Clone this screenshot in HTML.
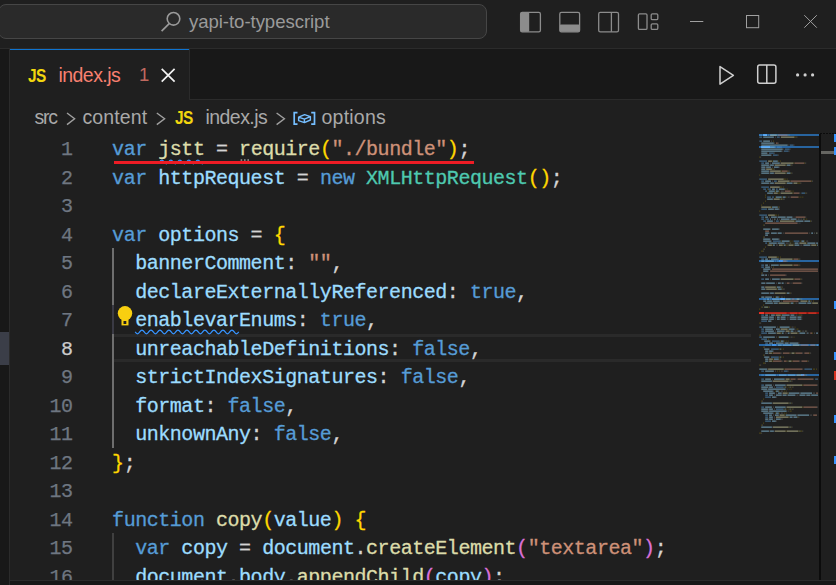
<!DOCTYPE html>
<html><head><meta charset="utf-8"><title>index.js - yapi-to-typescript</title>
<style>
html,body{margin:0;padding:0;background:#1f1f1f;}
body{width:836px;height:585px;position:relative;overflow:hidden;font-family:"Liberation Sans",sans-serif;color:#ccc;}
.abs{position:absolute}
#title{position:absolute;left:0;top:0;width:836px;height:48px;background:#1f1f1f;border-bottom:1px solid #2b2b2b}
#cc{position:absolute;left:-2px;top:4px;width:487px;height:33px;border:1px solid #464646;border-radius:8px;background:#2a2a2a}
#cctext{position:absolute;left:189px;top:10px;font-size:18.6px;line-height:24px;color:#9a9a9a;letter-spacing:-0.06px;white-space:nowrap}
#left{position:absolute;left:0;top:49px;width:9px;height:536px;background:#181818;border-right:1px solid #2b2b2b}
#leftsel{position:absolute;left:0;top:332px;width:9px;height:33px;background:#3b3e48}
#tabs{position:absolute;left:10px;top:49px;width:826px;height:50px;background:#181818;border-bottom:1px solid #2b2b2b}
#tab{position:absolute;left:10px;top:49px;width:179px;height:51px;background:#1f1f1f;border-right:1px solid #2b2b2b}
#tabline{position:absolute;left:10px;top:49px;width:179px;height:1.3px;background:#0f74d0}
.js{position:absolute;font-weight:bold;color:#f2d60e;font-size:18.4px;line-height:20px;letter-spacing:-0.6px;white-space:nowrap;transform:scaleX(0.84);transform-origin:0 0}
.ui{position:absolute;font-size:19.5px;line-height:24px;white-space:nowrap}
#bc .ui{color:#a9a9a9}
#bottom{position:absolute;left:10px;top:580px;width:826px;height:5px;background:#181818;border-top:1px solid #2b2b2b}
.ln{position:absolute;left:20px;width:52.5px;text-align:right;height:28.5px;line-height:28.5px;font-family:"Liberation Mono",monospace;font-size:20px;letter-spacing:-0.45px;color:#6e7681;white-space:pre;-webkit-text-stroke:0.25px}
.ln.cur{color:#ccc}
.cl{position:absolute;left:112.1px;height:28.5px;line-height:28.5px;font-family:"Liberation Mono",monospace;font-size:20px;letter-spacing:-0.46px;white-space:pre;-webkit-text-stroke:0.3px}
.guide{position:absolute;left:112px;width:1.5px;background:#404040}
</style></head><body>
<div id="title">
 <div id="cc"></div>
 <svg class="abs" style="left:158px;top:8px" width="28" height="28" viewBox="0 0 28 28"><circle cx="15.5" cy="10.8" r="6.3" fill="none" stroke="#9a9a9a" stroke-width="1.6"/><path d="M11.2 15.6 L3.6 23.2" stroke="#9a9a9a" stroke-width="1.7" fill="none"/></svg>
 <div id="cctext">yapi-to-typescript</div>
 <svg class="abs" style="left:515px;top:8px" width="150" height="30" viewBox="515 8 150 30" fill="none" stroke="#8c8c8c" stroke-width="1.3">
  <rect x="520.6" y="12.4" width="19.8" height="19.4" rx="1.6"/><rect x="520.6" y="12.4" width="8.6" height="19.4" fill="#8c8c8c" stroke="none" rx="1.2"/>
  <rect x="559.8" y="12.4" width="19.8" height="19.4" rx="1.6"/><rect x="559.8" y="24.6" width="19.8" height="7.2" fill="#8c8c8c" stroke="none" rx="1.2"/>
  <rect x="598.7" y="12.4" width="19.8" height="19.4" rx="1.6"/><path d="M611.4 12.4V31.8"/>
  <rect x="638.4" y="13.8" width="8.6" height="15.6" rx="1.2"/><rect x="651.2" y="13.8" width="6.6" height="5.8" rx="1.2"/><rect x="651.2" y="23.8" width="6.6" height="5.6" rx="1.2"/>
 </svg>
 <svg class="abs" style="left:680px;top:8px" width="150" height="30" viewBox="680 8 150 30" fill="none" stroke="#a0a0a0" stroke-width="1">
  <path d="M690 21.5H703.3"/>
  <rect x="746.5" y="15.5" width="12.2" height="12.2"/>
  <path d="M804.3 15.2L816.8 27.7M816.8 15.2L804.3 27.7"/>
 </svg>
</div>
<div id="left"></div><div id="leftsel"></div>
<div id="tabs"></div>
<div id="tab"></div><div id="tabline"></div>
<div class="js" style="left:28px;top:65.5px">JS</div>
<div class="ui" id="tabname" style="left:58.5px;top:63px;color:#f88070;letter-spacing:-0.55px">index.js</div>
<div class="ui" id="tabnum" style="left:139px;top:63px;color:#c0695f;font-size:18.5px">1</div>
<svg class="abs" style="left:158px;top:65px" width="20" height="20" viewBox="158 65 20 20"><path d="M161.7 68.8L174.6 81.7M174.6 68.8L161.7 81.7" stroke="#f2f2f2" stroke-width="1.7" fill="none"/></svg>
<svg class="abs" style="left:710px;top:58px" width="120" height="34" viewBox="710 58 120 34" fill="none" stroke="#cfcfcf" stroke-width="1.5">
 <path d="M720 66.6L733.4 75.3L720 84.2Z" stroke-linejoin="round"/>
 <rect x="757.7" y="65" width="18.2" height="18.2" rx="2"/><path d="M766.8 65V83.2"/>
 <g fill="#cfcfcf" stroke="none"><circle cx="797.6" cy="74.9" r="1.6"/><circle cx="805.1" cy="74.9" r="1.6"/><circle cx="812.6" cy="74.9" r="1.6"/></g>
</svg>
<div id="bc">
 <div class="ui" id="b1" style="left:34.5px;top:105px;letter-spacing:-1.2px">src</div>
 <div class="ui" id="b2" style="left:82.5px;top:105px;letter-spacing:0.1px">content</div>
 <div class="js" style="left:175px;top:108px">JS</div>
 <div class="ui" id="b3" style="left:205.5px;top:105px;letter-spacing:-0.55px">index.js</div>
 <div class="ui" id="b4" style="left:321.5px;top:105px;letter-spacing:0.23px">options</div>
 <svg class="abs" style="left:60px;top:108px" width="240" height="22" viewBox="60 108 240 22" fill="none" stroke="#a0a0a0" stroke-width="1.4">
  <path d="M67 113L74.6 118.8L67 124.6"/><path d="M156.8 113L164.6 118.8L156.8 124.6"/><path d="M276.6 113L284.4 118.8L276.6 124.6"/>
 </svg>
 <svg class="abs" style="left:290px;top:108px" width="30" height="22" viewBox="290 108 30 22" fill="none" stroke="#75beff" stroke-width="1.7">
  <path d="M297.5 112.7H294.2V124.2H297.5"/><path d="M311.2 112.7H314.5V124.2H311.2"/>
  <path d="M298.6 117.2L304.6 114.6L310.4 116.6V120L304.4 122.6L298.6 120.6Z M298.6 117.2L304.4 119.2L310.4 116.6 M304.4 119.2V122.6" stroke-width="1.4" stroke-linejoin="round"/>
 </svg>
</div>
<!-- editor -->
<div class="abs" style="left:114px;top:334px;width:637px;height:22px;border-top:3px solid #2a2a2a;border-bottom:3px solid #2a2a2a;box-sizing:content-box"></div>
<div class="guide" style="left:111.7px;width:2px;top:248.0px;height:199.5px;background:#6e6e6e"></div><div class="guide" style="left:111.7px;width:2px;top:305.0px;height:28.5px;background:#3a3a44"></div>
<div class="guide" style="top:533.0px;height:47.0px"></div>
<div class="ln" style="top:136.10px">1</div>
<div class="cl" style="top:136.10px"><span style="color:#569cd6">var</span><span style="color:#d4d4d4"> </span><span style="color:#dcdcaa">jstt</span><span style="color:#d4d4d4"> = </span><span style="color:#dcdcaa">require</span><span style="color:#ffd700">(</span><span style="color:#ce9178">"./bundle"</span><span style="color:#ffd700">)</span><span style="color:#d4d4d4">;</span></div>
<div class="ln" style="top:164.60px">2</div>
<div class="cl" style="top:164.60px"><span style="color:#569cd6">var</span><span style="color:#d4d4d4"> </span><span style="color:#9cdcfe">httpRequest</span><span style="color:#d4d4d4"> = </span><span style="color:#569cd6">new</span><span style="color:#d4d4d4"> </span><span style="color:#4ec9b0">XMLHttpRequest</span><span style="color:#ffd700">()</span><span style="color:#d4d4d4">;</span></div>
<div class="ln" style="top:193.10px">3</div>
<div class="ln" style="top:221.60px">4</div>
<div class="cl" style="top:221.60px"><span style="color:#569cd6">var</span><span style="color:#d4d4d4"> </span><span style="color:#9cdcfe">options</span><span style="color:#d4d4d4"> = </span><span style="color:#ffd700">{</span></div>
<div class="ln" style="top:250.10px">5</div>
<div class="cl" style="top:250.10px"><span style="color:#9cdcfe">  bannerComment</span><span style="color:#d4d4d4">: </span><span style="color:#ce9178">""</span><span style="color:#d4d4d4">,</span></div>
<div class="ln" style="top:278.60px">6</div>
<div class="cl" style="top:278.60px"><span style="color:#9cdcfe">  declareExternallyReferenced</span><span style="color:#d4d4d4">: </span><span style="color:#569cd6">true</span><span style="color:#d4d4d4">,</span></div>
<div class="ln" style="top:307.10px">7</div>
<div class="cl" style="top:307.10px"><span style="color:#9cdcfe">  enablevarEnums</span><span style="color:#d4d4d4">: </span><span style="color:#569cd6">true</span><span style="color:#d4d4d4">,</span></div>
<div class="ln cur" style="top:335.60px">8</div>
<div class="cl" style="top:335.60px"><span style="color:#9cdcfe">  unreachableDefinitions</span><span style="color:#d4d4d4">: </span><span style="color:#569cd6">false</span><span style="color:#d4d4d4">,</span></div>
<div class="ln" style="top:364.10px">9</div>
<div class="cl" style="top:364.10px"><span style="color:#9cdcfe">  strictIndexSignatures</span><span style="color:#d4d4d4">: </span><span style="color:#569cd6">false</span><span style="color:#d4d4d4">,</span></div>
<div class="ln" style="top:392.60px">10</div>
<div class="cl" style="top:392.60px"><span style="color:#9cdcfe">  format</span><span style="color:#d4d4d4">: </span><span style="color:#569cd6">false</span><span style="color:#d4d4d4">,</span></div>
<div class="ln" style="top:421.10px">11</div>
<div class="cl" style="top:421.10px"><span style="color:#9cdcfe">  unknownAny</span><span style="color:#d4d4d4">: </span><span style="color:#569cd6">false</span><span style="color:#d4d4d4">,</span></div>
<div class="ln" style="top:449.60px">12</div>
<div class="cl" style="top:449.60px"><span style="color:#ffd700">}</span><span style="color:#d4d4d4">;</span></div>
<div class="ln" style="top:478.10px">13</div>
<div class="ln" style="top:506.60px">14</div>
<div class="cl" style="top:506.60px"><span style="color:#569cd6">function</span><span style="color:#d4d4d4"> </span><span style="color:#dcdcaa">copy</span><span style="color:#ffd700">(</span><span style="color:#9cdcfe">value</span><span style="color:#ffd700">)</span><span style="color:#d4d4d4"> </span><span style="color:#ffd700">{</span></div>
<div class="ln" style="top:535.10px">15</div>
<div class="cl" style="top:535.10px"><span style="color:#569cd6">  var</span><span style="color:#d4d4d4"> </span><span style="color:#9cdcfe">copy</span><span style="color:#d4d4d4"> = </span><span style="color:#9cdcfe">document</span><span style="color:#d4d4d4">.</span><span style="color:#dcdcaa">createElement</span><span style="color:#da70d6">(</span><span style="color:#ce9178">"textarea"</span><span style="color:#da70d6">)</span><span style="color:#d4d4d4">;</span></div>
<div class="ln" style="top:563.60px">16</div>
<div class="cl" style="top:563.60px"><span style="color:#9cdcfe">  document</span><span style="color:#d4d4d4">.</span><span style="color:#9cdcfe">body</span><span style="color:#d4d4d4">.</span><span style="color:#dcdcaa">appendChild</span><span style="color:#da70d6">(</span><span style="color:#9cdcfe">copy</span><span style="color:#da70d6">)</span><span style="color:#d4d4d4">;</span></div>
<svg class="abs" style="left:150px;top:154px" width="120" height="14" viewBox="150 154 120 14" fill="none"><path d="M159.6 162 q2.25 -3.7 4.5 0 t4.5 0 t4.5 0 t4.5 0 t4.5 0 t4.5 0 t4.5 0 t4.5 0 t4.5 0 t4.5 0" stroke="#3794ff" stroke-width="1.25"/><g fill="#9a9a9a"><rect x="240.6" y="159.3" width="1.6" height="1.5"/><rect x="244" y="159.3" width="1.6" height="1.5"/><rect x="247.4" y="159.3" width="1.6" height="1.5"/></g></svg>
<div class="abs" style="left:113.5px;top:161px;width:360px;height:3px;background:#ee1c25"></div>
<svg class="abs" style="left:130px;top:326px" width="112" height="10" viewBox="130 326 112 10" fill="none" stroke="#3794ff" stroke-width="1.25"><path d="M135.2 331.9 q2.25 3.7 4.5 0 t4.5 0 t4.5 0 t4.5 0 t4.5 0 t4.5 0 t4.5 0 t4.5 0 t4.5 0 t4.5 0 t4.5 0 t4.5 0 t4.5 0 t4.5 0 t4.5 0 t4.5 0 t4.5 0 t4.5 0 t4.5 0 t4.5 0 t4.5 0 t4.5 0 t4.5 0"/></svg>
<svg class="abs" style="left:115px;top:303px" width="20" height="26" viewBox="115 303 20 26"><circle cx="125" cy="313.3" r="7.2" fill="#f8cf10"/><rect x="121.5" y="317.5" width="7" height="7.9" fill="#f8cf10"/><rect x="123.5" y="321" width="2.8" height="3" fill="#1f1f1f"/></svg>

<!-- minimap -->
<svg class="abs" style="left:750px;top:133px" width="86" height="447" viewBox="750 133 86 447" shape-rendering="crispEdges">
<rect x="759.3" y="134.1" width="59.3" height="2.1" fill="#28649f"/>
<rect x="763.2" y="134.1" width="3.9" height="2.1" fill="#3b8eea"/>
<rect x="759.3" y="146.1" width="59.3" height="2.1" fill="#28649f"/>
<rect x="761.3" y="146.1" width="8.8" height="2.1" fill="#3b8eea"/>
<rect x="759.3" y="260.1" width="59.3" height="2.1" fill="#28649f"/>
<rect x="778.9" y="260.1" width="3.9" height="2.1" fill="#3b8eea"/>
<rect x="759.3" y="298.1" width="59.3" height="2.1" fill="#28649f"/>
<rect x="779.9" y="298.1" width="4.9" height="2.1" fill="#3b8eea"/>
<rect x="759.3" y="344.1" width="59.3" height="2.1" fill="#28649f"/>
<rect x="772.0" y="344.1" width="3.9" height="2.1" fill="#3b8eea"/>
<rect x="759.3" y="374.1" width="59.3" height="2.1" fill="#28649f"/>
<rect x="800.5" y="374.1" width="3.9" height="2.1" fill="#3b8eea"/>
<rect x="759.3" y="312.1" width="59.3" height="2.1" fill="#8e1410"/>
<rect x="759.3" y="312.1" width="4.9" height="2.1" fill="#e0221c"/>
<g opacity="0.5" shape-rendering="auto">
<rect x="759.30" y="134.45" width="2.79" height="1.4" fill="#569cd6"/>
<rect x="763.22" y="134.45" width="3.77" height="1.4" fill="#9cdcfe"/>
<rect x="768.12" y="134.45" width="0.83" height="1.4" fill="#d4d4d4" fill-opacity=".45"/>
<rect x="770.08" y="134.45" width="6.71" height="1.4" fill="#dcdcaa"/>
<rect x="776.94" y="134.45" width="0.83" height="1.4" fill="#ffd700" fill-opacity=".45"/>
<rect x="777.92" y="134.45" width="9.65" height="1.4" fill="#ce9178"/>
<rect x="787.72" y="134.45" width="0.83" height="1.4" fill="#ffd700" fill-opacity=".45"/>
<rect x="788.70" y="134.45" width="0.83" height="1.4" fill="#d4d4d4" fill-opacity=".45"/>
<rect x="759.30" y="136.45" width="2.79" height="1.4" fill="#569cd6"/>
<rect x="763.22" y="136.45" width="10.63" height="1.4" fill="#9cdcfe"/>
<rect x="774.98" y="136.45" width="0.83" height="1.4" fill="#d4d4d4" fill-opacity=".45"/>
<rect x="776.94" y="136.45" width="2.79" height="1.4" fill="#569cd6"/>
<rect x="780.86" y="136.45" width="13.57" height="1.4" fill="#dcdcaa"/>
<rect x="794.58" y="136.45" width="0.83" height="1.4" fill="#ffd700" fill-opacity=".45"/>
<rect x="795.56" y="136.45" width="0.83" height="1.4" fill="#ffd700" fill-opacity=".45"/>
<rect x="796.54" y="136.45" width="0.83" height="1.4" fill="#d4d4d4" fill-opacity=".45"/>
<rect x="759.30" y="140.45" width="2.79" height="1.4" fill="#569cd6"/>
<rect x="763.22" y="140.45" width="6.71" height="1.4" fill="#9cdcfe"/>
<rect x="771.06" y="140.45" width="0.83" height="1.4" fill="#d4d4d4" fill-opacity=".45"/>
<rect x="773.02" y="140.45" width="0.83" height="1.4" fill="#ffd700" fill-opacity=".45"/>
<rect x="761.26" y="142.45" width="12.59" height="1.4" fill="#9cdcfe"/>
<rect x="774.00" y="142.45" width="0.83" height="1.4" fill="#d4d4d4" fill-opacity=".45"/>
<rect x="775.96" y="142.45" width="1.81" height="1.4" fill="#ce9178"/>
<rect x="777.92" y="142.45" width="0.83" height="1.4" fill="#d4d4d4" fill-opacity=".45"/>
<rect x="761.26" y="144.45" width="26.31" height="1.4" fill="#9cdcfe"/>
<rect x="787.72" y="144.45" width="0.83" height="1.4" fill="#d4d4d4" fill-opacity=".45"/>
<rect x="789.68" y="144.45" width="3.77" height="1.4" fill="#569cd6"/>
<rect x="793.60" y="144.45" width="0.83" height="1.4" fill="#d4d4d4" fill-opacity=".45"/>
<rect x="761.26" y="146.45" width="13.57" height="1.4" fill="#9cdcfe"/>
<rect x="774.98" y="146.45" width="0.83" height="1.4" fill="#d4d4d4" fill-opacity=".45"/>
<rect x="776.94" y="146.45" width="3.77" height="1.4" fill="#569cd6"/>
<rect x="780.86" y="146.45" width="0.83" height="1.4" fill="#d4d4d4" fill-opacity=".45"/>
<rect x="761.26" y="148.45" width="21.41" height="1.4" fill="#9cdcfe"/>
<rect x="782.82" y="148.45" width="0.83" height="1.4" fill="#d4d4d4" fill-opacity=".45"/>
<rect x="784.78" y="148.45" width="4.75" height="1.4" fill="#569cd6"/>
<rect x="789.68" y="148.45" width="0.83" height="1.4" fill="#d4d4d4" fill-opacity=".45"/>
<rect x="761.26" y="150.45" width="20.43" height="1.4" fill="#9cdcfe"/>
<rect x="781.84" y="150.45" width="0.83" height="1.4" fill="#d4d4d4" fill-opacity=".45"/>
<rect x="783.80" y="150.45" width="4.75" height="1.4" fill="#569cd6"/>
<rect x="788.70" y="150.45" width="0.83" height="1.4" fill="#d4d4d4" fill-opacity=".45"/>
<rect x="761.26" y="152.45" width="5.73" height="1.4" fill="#9cdcfe"/>
<rect x="767.14" y="152.45" width="0.83" height="1.4" fill="#d4d4d4" fill-opacity=".45"/>
<rect x="769.10" y="152.45" width="4.75" height="1.4" fill="#569cd6"/>
<rect x="774.00" y="152.45" width="0.83" height="1.4" fill="#d4d4d4" fill-opacity=".45"/>
<rect x="761.26" y="154.45" width="9.65" height="1.4" fill="#9cdcfe"/>
<rect x="771.06" y="154.45" width="0.83" height="1.4" fill="#d4d4d4" fill-opacity=".45"/>
<rect x="773.02" y="154.45" width="4.75" height="1.4" fill="#569cd6"/>
<rect x="777.92" y="154.45" width="0.83" height="1.4" fill="#d4d4d4" fill-opacity=".45"/>
<rect x="759.30" y="156.45" width="0.83" height="1.4" fill="#ffd700" fill-opacity=".45"/>
<rect x="760.28" y="156.45" width="0.83" height="1.4" fill="#d4d4d4" fill-opacity=".45"/>
<rect x="759.30" y="160.45" width="7.69" height="1.4" fill="#569cd6"/>
<rect x="768.12" y="160.45" width="3.77" height="1.4" fill="#dcdcaa"/>
<rect x="772.04" y="160.45" width="0.83" height="1.4" fill="#ffd700" fill-opacity=".45"/>
<rect x="773.02" y="160.45" width="4.75" height="1.4" fill="#9cdcfe"/>
<rect x="777.92" y="160.45" width="0.83" height="1.4" fill="#ffd700" fill-opacity=".45"/>
<rect x="779.88" y="160.45" width="0.83" height="1.4" fill="#ffd700" fill-opacity=".45"/>
<rect x="761.26" y="162.45" width="2.79" height="1.4" fill="#569cd6"/>
<rect x="765.18" y="162.45" width="3.77" height="1.4" fill="#9cdcfe"/>
<rect x="770.08" y="162.45" width="0.83" height="1.4" fill="#d4d4d4" fill-opacity=".45"/>
<rect x="772.04" y="162.45" width="7.69" height="1.4" fill="#9cdcfe"/>
<rect x="779.88" y="162.45" width="0.83" height="1.4" fill="#d4d4d4" fill-opacity=".45"/>
<rect x="780.86" y="162.45" width="12.59" height="1.4" fill="#dcdcaa"/>
<rect x="793.60" y="162.45" width="0.83" height="1.4" fill="#ffd700" fill-opacity=".45"/>
<rect x="794.58" y="162.45" width="9.65" height="1.4" fill="#ce9178"/>
<rect x="804.38" y="162.45" width="0.83" height="1.4" fill="#ffd700" fill-opacity=".45"/>
<rect x="805.36" y="162.45" width="0.83" height="1.4" fill="#d4d4d4" fill-opacity=".45"/>
<rect x="761.26" y="164.45" width="7.69" height="1.4" fill="#9cdcfe"/>
<rect x="769.10" y="164.45" width="0.83" height="1.4" fill="#d4d4d4" fill-opacity=".45"/>
<rect x="770.08" y="164.45" width="3.77" height="1.4" fill="#9cdcfe"/>
<rect x="774.00" y="164.45" width="0.83" height="1.4" fill="#d4d4d4" fill-opacity=".45"/>
<rect x="774.98" y="164.45" width="10.63" height="1.4" fill="#dcdcaa"/>
<rect x="785.76" y="164.45" width="0.83" height="1.4" fill="#ffd700" fill-opacity=".45"/>
<rect x="786.74" y="164.45" width="3.77" height="1.4" fill="#9cdcfe"/>
<rect x="790.66" y="164.45" width="0.83" height="1.4" fill="#ffd700" fill-opacity=".45"/>
<rect x="791.64" y="164.45" width="0.83" height="1.4" fill="#d4d4d4" fill-opacity=".45"/>
<rect x="761.26" y="166.45" width="3.77" height="1.4" fill="#9cdcfe"/>
<rect x="765.18" y="166.45" width="0.83" height="1.4" fill="#d4d4d4" fill-opacity=".45"/>
<rect x="766.16" y="166.45" width="4.75" height="1.4" fill="#9cdcfe"/>
<rect x="772.04" y="166.45" width="0.83" height="1.4" fill="#d4d4d4" fill-opacity=".45"/>
<rect x="774.00" y="166.45" width="4.75" height="1.4" fill="#9cdcfe"/>
<rect x="778.90" y="166.45" width="0.83" height="1.4" fill="#d4d4d4" fill-opacity=".45"/>
<rect x="761.26" y="168.45" width="3.77" height="1.4" fill="#9cdcfe"/>
<rect x="765.18" y="168.45" width="0.83" height="1.4" fill="#d4d4d4" fill-opacity=".45"/>
<rect x="766.16" y="168.45" width="5.73" height="1.4" fill="#dcdcaa"/>
<rect x="772.04" y="168.45" width="0.83" height="1.4" fill="#ffd700" fill-opacity=".45"/>
<rect x="773.02" y="168.45" width="0.83" height="1.4" fill="#ffd700" fill-opacity=".45"/>
<rect x="774.00" y="168.45" width="0.83" height="1.4" fill="#d4d4d4" fill-opacity=".45"/>
<rect x="761.26" y="170.45" width="7.69" height="1.4" fill="#9cdcfe"/>
<rect x="769.10" y="170.45" width="0.83" height="1.4" fill="#d4d4d4" fill-opacity=".45"/>
<rect x="770.08" y="170.45" width="10.63" height="1.4" fill="#dcdcaa"/>
<rect x="780.86" y="170.45" width="0.83" height="1.4" fill="#ffd700" fill-opacity=".45"/>
<rect x="781.84" y="170.45" width="5.73" height="1.4" fill="#ce9178"/>
<rect x="787.72" y="170.45" width="0.83" height="1.4" fill="#ffd700" fill-opacity=".45"/>
<rect x="788.70" y="170.45" width="0.83" height="1.4" fill="#d4d4d4" fill-opacity=".45"/>
<rect x="761.26" y="172.45" width="7.69" height="1.4" fill="#9cdcfe"/>
<rect x="769.10" y="172.45" width="0.83" height="1.4" fill="#d4d4d4" fill-opacity=".45"/>
<rect x="770.08" y="172.45" width="3.77" height="1.4" fill="#9cdcfe"/>
<rect x="774.00" y="172.45" width="0.83" height="1.4" fill="#d4d4d4" fill-opacity=".45"/>
<rect x="774.98" y="172.45" width="10.63" height="1.4" fill="#dcdcaa"/>
<rect x="785.76" y="172.45" width="0.83" height="1.4" fill="#ffd700" fill-opacity=".45"/>
<rect x="786.74" y="172.45" width="3.77" height="1.4" fill="#9cdcfe"/>
<rect x="790.66" y="172.45" width="0.83" height="1.4" fill="#ffd700" fill-opacity=".45"/>
<rect x="791.64" y="172.45" width="0.83" height="1.4" fill="#d4d4d4" fill-opacity=".45"/>
<rect x="759.30" y="174.45" width="0.83" height="1.4" fill="#ffd700" fill-opacity=".45"/>
<rect x="759.30" y="178.45" width="7.69" height="1.4" fill="#569cd6"/>
<rect x="768.12" y="178.45" width="15.53" height="1.4" fill="#dcdcaa"/>
<rect x="783.80" y="178.45" width="0.83" height="1.4" fill="#ffd700" fill-opacity=".45"/>
<rect x="784.78" y="178.45" width="0.83" height="1.4" fill="#ffd700" fill-opacity=".45"/>
<rect x="786.74" y="178.45" width="0.83" height="1.4" fill="#ffd700" fill-opacity=".45"/>
<rect x="761.26" y="180.45" width="2.79" height="1.4" fill="#569cd6"/>
<rect x="765.18" y="180.45" width="5.73" height="1.4" fill="#9cdcfe"/>
<rect x="772.04" y="180.45" width="0.83" height="1.4" fill="#d4d4d4" fill-opacity=".45"/>
<rect x="774.00" y="180.45" width="2.79" height="1.4" fill="#569cd6"/>
<rect x="777.92" y="180.45" width="11.61" height="1.4" fill="#dcdcaa"/>
<rect x="789.68" y="180.45" width="0.83" height="1.4" fill="#ffd700" fill-opacity=".45"/>
<rect x="790.66" y="180.45" width="20.43" height="1.4" fill="#ce9178"/>
<rect x="811.24" y="180.45" width="0.83" height="1.4" fill="#ffd700" fill-opacity=".45"/>
<rect x="812.22" y="180.45" width="0.83" height="1.4" fill="#d4d4d4" fill-opacity=".45"/>
<rect x="761.26" y="182.45" width="7.69" height="1.4" fill="#9cdcfe"/>
<rect x="769.10" y="182.45" width="0.83" height="1.4" fill="#d4d4d4" fill-opacity=".45"/>
<rect x="770.08" y="182.45" width="3.77" height="1.4" fill="#9cdcfe"/>
<rect x="774.00" y="182.45" width="0.83" height="1.4" fill="#d4d4d4" fill-opacity=".45"/>
<rect x="774.98" y="182.45" width="10.63" height="1.4" fill="#dcdcaa"/>
<rect x="785.76" y="182.45" width="0.83" height="1.4" fill="#ffd700" fill-opacity=".45"/>
<rect x="786.74" y="182.45" width="5.73" height="1.4" fill="#9cdcfe"/>
<rect x="792.62" y="182.45" width="0.83" height="1.4" fill="#d4d4d4" fill-opacity=".45"/>
<rect x="793.60" y="182.45" width="3.77" height="1.4" fill="#dcdcaa"/>
<rect x="797.52" y="182.45" width="0.83" height="1.4" fill="#ffd700" fill-opacity=".45"/>
<rect x="798.50" y="182.45" width="0.83" height="1.4" fill="#ffd700" fill-opacity=".45"/>
<rect x="799.48" y="182.45" width="0.83" height="1.4" fill="#ffd700" fill-opacity=".45"/>
<rect x="800.46" y="182.45" width="0.83" height="1.4" fill="#d4d4d4" fill-opacity=".45"/>
<rect x="761.26" y="186.45" width="7.69" height="1.4" fill="#569cd6"/>
<rect x="770.08" y="186.45" width="9.65" height="1.4" fill="#dcdcaa"/>
<rect x="779.88" y="186.45" width="0.83" height="1.4" fill="#ffd700" fill-opacity=".45"/>
<rect x="780.86" y="186.45" width="0.83" height="1.4" fill="#ffd700" fill-opacity=".45"/>
<rect x="782.82" y="186.45" width="0.83" height="1.4" fill="#ffd700" fill-opacity=".45"/>
<rect x="763.22" y="188.45" width="2.79" height="1.4" fill="#569cd6"/>
<rect x="767.14" y="188.45" width="0.83" height="1.4" fill="#ffd700" fill-opacity=".45"/>
<rect x="768.12" y="188.45" width="2.79" height="1.4" fill="#569cd6"/>
<rect x="772.04" y="188.45" width="2.79" height="1.4" fill="#9cdcfe"/>
<rect x="775.96" y="188.45" width="1.81" height="1.4" fill="#569cd6"/>
<rect x="778.90" y="188.45" width="5.73" height="1.4" fill="#9cdcfe"/>
<rect x="784.78" y="188.45" width="0.83" height="1.4" fill="#ffd700" fill-opacity=".45"/>
<rect x="786.74" y="188.45" width="0.83" height="1.4" fill="#ffd700" fill-opacity=".45"/>
<rect x="765.18" y="190.45" width="1.81" height="1.4" fill="#569cd6"/>
<rect x="768.12" y="190.45" width="0.83" height="1.4" fill="#ffd700" fill-opacity=".45"/>
<rect x="769.10" y="190.45" width="5.73" height="1.4" fill="#9cdcfe"/>
<rect x="774.98" y="190.45" width="0.83" height="1.4" fill="#ffd700" fill-opacity=".45"/>
<rect x="775.96" y="190.45" width="2.79" height="1.4" fill="#9cdcfe"/>
<rect x="778.90" y="190.45" width="0.83" height="1.4" fill="#ffd700" fill-opacity=".45"/>
<rect x="780.86" y="190.45" width="0.83" height="1.4" fill="#d4d4d4" fill-opacity=".45"/>
<rect x="781.84" y="190.45" width="0.83" height="1.4" fill="#d4d4d4" fill-opacity=".45"/>
<rect x="782.82" y="190.45" width="0.83" height="1.4" fill="#d4d4d4" fill-opacity=".45"/>
<rect x="784.78" y="190.45" width="5.73" height="1.4" fill="#ce9178"/>
<rect x="790.66" y="190.45" width="0.83" height="1.4" fill="#ffd700" fill-opacity=".45"/>
<rect x="792.62" y="190.45" width="0.83" height="1.4" fill="#ffd700" fill-opacity=".45"/>
<rect x="767.14" y="192.45" width="5.73" height="1.4" fill="#9cdcfe"/>
<rect x="773.02" y="192.45" width="0.83" height="1.4" fill="#d4d4d4" fill-opacity=".45"/>
<rect x="774.00" y="192.45" width="3.77" height="1.4" fill="#dcdcaa"/>
<rect x="777.92" y="192.45" width="0.83" height="1.4" fill="#ffd700" fill-opacity=".45"/>
<rect x="778.90" y="192.45" width="0.83" height="1.4" fill="#ffd700" fill-opacity=".45"/>
<rect x="779.88" y="192.45" width="0.83" height="1.4" fill="#d4d4d4" fill-opacity=".45"/>
<rect x="780.86" y="192.45" width="11.61" height="1.4" fill="#dcdcaa"/>
<rect x="792.62" y="192.45" width="0.83" height="1.4" fill="#ffd700" fill-opacity=".45"/>
<rect x="793.60" y="192.45" width="5.73" height="1.4" fill="#ce9178"/>
<rect x="799.48" y="192.45" width="0.83" height="1.4" fill="#d4d4d4" fill-opacity=".45"/>
<rect x="801.44" y="192.45" width="3.77" height="1.4" fill="#569cd6"/>
<rect x="805.36" y="192.45" width="0.83" height="1.4" fill="#ffd700" fill-opacity=".45"/>
<rect x="806.34" y="192.45" width="0.83" height="1.4" fill="#d4d4d4" fill-opacity=".45"/>
<rect x="765.18" y="194.45" width="0.83" height="1.4" fill="#ffd700" fill-opacity=".45"/>
<rect x="765.18" y="196.45" width="0.83" height="1.4" fill="#ffd700" fill-opacity=".45"/>
<rect x="767.14" y="196.45" width="3.77" height="1.4" fill="#569cd6"/>
<rect x="772.04" y="196.45" width="1.81" height="1.4" fill="#569cd6"/>
<rect x="774.98" y="196.45" width="0.83" height="1.4" fill="#ffd700" fill-opacity=".45"/>
<rect x="775.96" y="196.45" width="5.73" height="1.4" fill="#9cdcfe"/>
<rect x="781.84" y="196.45" width="0.83" height="1.4" fill="#ffd700" fill-opacity=".45"/>
<rect x="782.82" y="196.45" width="2.79" height="1.4" fill="#9cdcfe"/>
<rect x="785.76" y="196.45" width="0.83" height="1.4" fill="#ffd700" fill-opacity=".45"/>
<rect x="787.72" y="196.45" width="0.83" height="1.4" fill="#d4d4d4" fill-opacity=".45"/>
<rect x="788.70" y="196.45" width="0.83" height="1.4" fill="#d4d4d4" fill-opacity=".45"/>
<rect x="790.66" y="196.45" width="7.69" height="1.4" fill="#ce9178"/>
<rect x="798.50" y="196.45" width="0.83" height="1.4" fill="#ffd700" fill-opacity=".45"/>
<rect x="800.46" y="196.45" width="0.83" height="1.4" fill="#ffd700" fill-opacity=".45"/>
<rect x="802.42" y="196.45" width="0.83" height="1.4" fill="#ffd700" fill-opacity=".45"/>
<rect x="767.14" y="198.45" width="5.73" height="1.4" fill="#9cdcfe"/>
<rect x="773.02" y="198.45" width="0.83" height="1.4" fill="#d4d4d4" fill-opacity=".45"/>
<rect x="774.00" y="198.45" width="5.73" height="1.4" fill="#dcdcaa"/>
<rect x="779.88" y="198.45" width="0.83" height="1.4" fill="#ffd700" fill-opacity=".45"/>
<rect x="780.86" y="198.45" width="0.83" height="1.4" fill="#b5cea8"/>
<rect x="781.84" y="198.45" width="0.83" height="1.4" fill="#ffd700" fill-opacity=".45"/>
<rect x="782.82" y="198.45" width="0.83" height="1.4" fill="#d4d4d4" fill-opacity=".45"/>
<rect x="783.80" y="198.45" width="0.83" height="1.4" fill="#d4d4d4" fill-opacity=".45"/>
<rect x="765.18" y="200.45" width="0.83" height="1.4" fill="#ffd700" fill-opacity=".45"/>
<rect x="763.22" y="202.45" width="0.83" height="1.4" fill="#ffd700" fill-opacity=".45"/>
<rect x="761.26" y="204.45" width="0.83" height="1.4" fill="#ffd700" fill-opacity=".45"/>
<rect x="761.26" y="206.45" width="9.65" height="1.4" fill="#dcdcaa"/>
<rect x="771.06" y="206.45" width="0.83" height="1.4" fill="#ffd700" fill-opacity=".45"/>
<rect x="772.04" y="206.45" width="5.73" height="1.4" fill="#9cdcfe"/>
<rect x="777.92" y="206.45" width="0.83" height="1.4" fill="#ffd700" fill-opacity=".45"/>
<rect x="778.90" y="206.45" width="0.83" height="1.4" fill="#d4d4d4" fill-opacity=".45"/>
<rect x="761.26" y="208.45" width="5.73" height="1.4" fill="#569cd6"/>
<rect x="768.12" y="208.45" width="5.73" height="1.4" fill="#9cdcfe"/>
<rect x="774.00" y="208.45" width="0.83" height="1.4" fill="#d4d4d4" fill-opacity=".45"/>
<rect x="774.98" y="208.45" width="3.77" height="1.4" fill="#9cdcfe"/>
<rect x="778.90" y="208.45" width="0.83" height="1.4" fill="#d4d4d4" fill-opacity=".45"/>
<rect x="759.30" y="210.45" width="0.83" height="1.4" fill="#ffd700" fill-opacity=".45"/>
<rect x="759.30" y="214.45" width="7.69" height="1.4" fill="#569cd6"/>
<rect x="768.12" y="214.45" width="6.71" height="1.4" fill="#dcdcaa"/>
<rect x="774.98" y="214.45" width="0.83" height="1.4" fill="#ffd700" fill-opacity=".45"/>
<rect x="775.96" y="214.45" width="0.83" height="1.4" fill="#ffd700" fill-opacity=".45"/>
<rect x="777.92" y="214.45" width="0.83" height="1.4" fill="#ffd700" fill-opacity=".45"/>
<rect x="761.26" y="216.45" width="2.79" height="1.4" fill="#569cd6"/>
<rect x="765.18" y="216.45" width="2.79" height="1.4" fill="#9cdcfe"/>
<rect x="769.10" y="216.45" width="0.83" height="1.4" fill="#d4d4d4" fill-opacity=".45"/>
<rect x="771.06" y="216.45" width="5.73" height="1.4" fill="#9cdcfe"/>
<rect x="776.94" y="216.45" width="0.83" height="1.4" fill="#d4d4d4" fill-opacity=".45"/>
<rect x="777.92" y="216.45" width="7.69" height="1.4" fill="#9cdcfe"/>
<rect x="785.76" y="216.45" width="0.83" height="1.4" fill="#d4d4d4" fill-opacity=".45"/>
<rect x="786.74" y="216.45" width="5.73" height="1.4" fill="#9cdcfe"/>
<rect x="793.60" y="216.45" width="0.83" height="1.4" fill="#d4d4d4" fill-opacity=".45"/>
<rect x="795.56" y="216.45" width="9.65" height="1.4" fill="#ce9178"/>
<rect x="805.36" y="216.45" width="0.83" height="1.4" fill="#d4d4d4" fill-opacity=".45"/>
<rect x="761.26" y="218.45" width="2.79" height="1.4" fill="#569cd6"/>
<rect x="765.18" y="218.45" width="0.83" height="1.4" fill="#ffd700" fill-opacity=".45"/>
<rect x="766.16" y="218.45" width="2.79" height="1.4" fill="#569cd6"/>
<rect x="770.08" y="218.45" width="0.83" height="1.4" fill="#9cdcfe"/>
<rect x="772.04" y="218.45" width="0.83" height="1.4" fill="#d4d4d4" fill-opacity=".45"/>
<rect x="774.00" y="218.45" width="0.83" height="1.4" fill="#b5cea8"/>
<rect x="774.98" y="218.45" width="0.83" height="1.4" fill="#d4d4d4" fill-opacity=".45"/>
<rect x="776.94" y="218.45" width="0.83" height="1.4" fill="#9cdcfe"/>
<rect x="778.90" y="218.45" width="0.83" height="1.4" fill="#d4d4d4" fill-opacity=".45"/>
<rect x="780.86" y="218.45" width="8.67" height="1.4" fill="#9cdcfe"/>
<rect x="789.68" y="218.45" width="0.83" height="1.4" fill="#d4d4d4" fill-opacity=".45"/>
<rect x="790.66" y="218.45" width="5.73" height="1.4" fill="#9cdcfe"/>
<rect x="796.54" y="218.45" width="0.83" height="1.4" fill="#d4d4d4" fill-opacity=".45"/>
<rect x="798.50" y="218.45" width="0.83" height="1.4" fill="#9cdcfe"/>
<rect x="800.46" y="218.45" width="0.83" height="1.4" fill="#d4d4d4" fill-opacity=".45"/>
<rect x="801.44" y="218.45" width="0.83" height="1.4" fill="#d4d4d4" fill-opacity=".45"/>
<rect x="803.40" y="218.45" width="0.83" height="1.4" fill="#b5cea8"/>
<rect x="804.38" y="218.45" width="0.83" height="1.4" fill="#ffd700" fill-opacity=".45"/>
<rect x="806.34" y="218.45" width="0.83" height="1.4" fill="#ffd700" fill-opacity=".45"/>
<rect x="763.22" y="220.45" width="2.79" height="1.4" fill="#569cd6"/>
<rect x="767.14" y="220.45" width="5.73" height="1.4" fill="#9cdcfe"/>
<rect x="774.00" y="220.45" width="0.83" height="1.4" fill="#d4d4d4" fill-opacity=".45"/>
<rect x="775.96" y="220.45" width="2.79" height="1.4" fill="#569cd6"/>
<rect x="779.88" y="220.45" width="14.55" height="1.4" fill="#dcdcaa"/>
<rect x="794.58" y="220.45" width="0.83" height="1.4" fill="#ffd700" fill-opacity=".45"/>
<rect x="795.56" y="220.45" width="7.69" height="1.4" fill="#9cdcfe"/>
<rect x="803.40" y="220.45" width="0.83" height="1.4" fill="#d4d4d4" fill-opacity=".45"/>
<rect x="804.38" y="220.45" width="5.73" height="1.4" fill="#9cdcfe"/>
<rect x="810.26" y="220.45" width="0.83" height="1.4" fill="#ffd700" fill-opacity=".45"/>
<rect x="811.24" y="220.45" width="0.83" height="1.4" fill="#d4d4d4" fill-opacity=".45"/>
<rect x="765.18" y="222.45" width="32.19" height="1.4" fill="#ce9178"/>
<rect x="797.52" y="222.45" width="0.83" height="1.4" fill="#d4d4d4" fill-opacity=".45"/>
<rect x="799.48" y="222.45" width="0.83" height="1.4" fill="#d4d4d4" fill-opacity=".45"/>
<rect x="763.22" y="224.45" width="0.83" height="1.4" fill="#ffd700" fill-opacity=".45"/>
<rect x="764.20" y="224.45" width="0.83" height="1.4" fill="#d4d4d4" fill-opacity=".45"/>
<rect x="763.22" y="228.45" width="6.71" height="1.4" fill="#9cdcfe"/>
<rect x="770.08" y="228.45" width="0.83" height="1.4" fill="#d4d4d4" fill-opacity=".45"/>
<rect x="772.04" y="228.45" width="6.71" height="1.4" fill="#9cdcfe"/>
<rect x="778.90" y="228.45" width="0.83" height="1.4" fill="#d4d4d4" fill-opacity=".45"/>
<rect x="765.18" y="230.45" width="3.77" height="1.4" fill="#ce9178"/>
<rect x="765.18" y="232.45" width="3.77" height="1.4" fill="#9cdcfe"/>
<rect x="769.10" y="232.45" width="0.83" height="1.4" fill="#d4d4d4" fill-opacity=".45"/>
<rect x="771.06" y="232.45" width="5.73" height="1.4" fill="#9cdcfe"/>
<rect x="776.94" y="232.45" width="0.83" height="1.4" fill="#d4d4d4" fill-opacity=".45"/>
<rect x="777.92" y="232.45" width="3.77" height="1.4" fill="#9cdcfe"/>
<rect x="782.82" y="232.45" width="0.83" height="1.4" fill="#d4d4d4" fill-opacity=".45"/>
<rect x="784.78" y="232.45" width="23.37" height="1.4" fill="#ce9178"/>
<rect x="809.28" y="232.45" width="0.83" height="1.4" fill="#d4d4d4" fill-opacity=".45"/>
<rect x="811.24" y="232.45" width="1.81" height="1.4" fill="#9cdcfe"/>
<rect x="814.18" y="232.45" width="0.83" height="1.4" fill="#d4d4d4" fill-opacity=".45"/>
<rect x="816.14" y="232.45" width="0.83" height="1.4" fill="#b5cea8"/>
<rect x="817.12" y="232.45" width="0.83" height="1.4" fill="#d4d4d4" fill-opacity=".45"/>
<rect x="765.18" y="234.45" width="2.79" height="1.4" fill="#9cdcfe"/>
<rect x="763.22" y="236.45" width="0.83" height="1.4" fill="#ffd700" fill-opacity=".45"/>
<rect x="764.20" y="236.45" width="0.83" height="1.4" fill="#d4d4d4" fill-opacity=".45"/>
<rect x="763.22" y="238.45" width="6.71" height="1.4" fill="#9cdcfe"/>
<rect x="770.08" y="238.45" width="0.83" height="1.4" fill="#d4d4d4" fill-opacity=".45"/>
<rect x="772.04" y="238.45" width="6.71" height="1.4" fill="#9cdcfe"/>
<rect x="778.90" y="238.45" width="0.83" height="1.4" fill="#d4d4d4" fill-opacity=".45"/>
<rect x="763.22" y="240.45" width="7.69" height="1.4" fill="#9cdcfe"/>
<rect x="771.06" y="240.45" width="0.83" height="1.4" fill="#d4d4d4" fill-opacity=".45"/>
<rect x="773.02" y="240.45" width="7.69" height="1.4" fill="#569cd6"/>
<rect x="780.86" y="240.45" width="0.83" height="1.4" fill="#ffd700" fill-opacity=".45"/>
<rect x="781.84" y="240.45" width="7.69" height="1.4" fill="#9cdcfe"/>
<rect x="789.68" y="240.45" width="0.83" height="1.4" fill="#ffd700" fill-opacity=".45"/>
<rect x="791.64" y="240.45" width="0.83" height="1.4" fill="#ffd700" fill-opacity=".45"/>
<rect x="793.60" y="240.45" width="5.73" height="1.4" fill="#569cd6"/>
<rect x="800.46" y="240.45" width="0.83" height="1.4" fill="#ffd700" fill-opacity=".45"/>
<rect x="801.44" y="240.45" width="2.79" height="1.4" fill="#9cdcfe"/>
<rect x="804.38" y="240.45" width="0.83" height="1.4" fill="#ffd700" fill-opacity=".45"/>
<rect x="806.34" y="240.45" width="0.83" height="1.4" fill="#d4d4d4" fill-opacity=".45"/>
<rect x="807.32" y="240.45" width="0.83" height="1.4" fill="#d4d4d4" fill-opacity=".45"/>
<rect x="765.18" y="242.45" width="1.81" height="1.4" fill="#569cd6"/>
<rect x="768.12" y="242.45" width="0.83" height="1.4" fill="#ffd700" fill-opacity=".45"/>
<rect x="769.10" y="242.45" width="7.69" height="1.4" fill="#9cdcfe"/>
<rect x="776.94" y="242.45" width="0.83" height="1.4" fill="#d4d4d4" fill-opacity=".45"/>
<rect x="777.92" y="242.45" width="6.71" height="1.4" fill="#9cdcfe"/>
<rect x="785.76" y="242.45" width="0.83" height="1.4" fill="#d4d4d4" fill-opacity=".45"/>
<rect x="786.74" y="242.45" width="0.83" height="1.4" fill="#d4d4d4" fill-opacity=".45"/>
<rect x="787.72" y="242.45" width="0.83" height="1.4" fill="#d4d4d4" fill-opacity=".45"/>
<rect x="789.68" y="242.45" width="0.83" height="1.4" fill="#b5cea8"/>
<rect x="790.66" y="242.45" width="0.83" height="1.4" fill="#ffd700" fill-opacity=".45"/>
<rect x="792.62" y="242.45" width="0.83" height="1.4" fill="#ffd700" fill-opacity=".45"/>
<rect x="794.58" y="242.45" width="3.77" height="1.4" fill="#9cdcfe"/>
<rect x="798.50" y="242.45" width="0.83" height="1.4" fill="#d4d4d4" fill-opacity=".45"/>
<rect x="799.48" y="242.45" width="6.71" height="1.4" fill="#dcdcaa"/>
<rect x="806.34" y="242.45" width="0.83" height="1.4" fill="#ffd700" fill-opacity=".45"/>
<rect x="807.32" y="242.45" width="7.69" height="1.4" fill="#9cdcfe"/>
<rect x="815.16" y="242.45" width="0.83" height="1.4" fill="#d4d4d4" fill-opacity=".45"/>
<rect x="816.14" y="242.45" width="1.81" height="1.4" fill="#9cdcfe"/>
<rect x="767.14" y="244.45" width="0.83" height="1.4" fill="#d4d4d4" fill-opacity=".45"/>
<rect x="768.12" y="244.45" width="3.77" height="1.4" fill="#dcdcaa"/>
<rect x="772.04" y="244.45" width="0.83" height="1.4" fill="#ffd700" fill-opacity=".45"/>
<rect x="773.02" y="244.45" width="1.81" height="1.4" fill="#9cdcfe"/>
<rect x="775.96" y="244.45" width="0.83" height="1.4" fill="#d4d4d4" fill-opacity=".45"/>
<rect x="776.94" y="244.45" width="0.83" height="1.4" fill="#d4d4d4" fill-opacity=".45"/>
<rect x="778.90" y="244.45" width="3.77" height="1.4" fill="#dcdcaa"/>
<rect x="782.82" y="244.45" width="0.83" height="1.4" fill="#ffd700" fill-opacity=".45"/>
<rect x="783.80" y="244.45" width="1.81" height="1.4" fill="#9cdcfe"/>
<rect x="785.76" y="244.45" width="0.83" height="1.4" fill="#ffd700" fill-opacity=".45"/>
<rect x="786.74" y="244.45" width="0.83" height="1.4" fill="#ffd700" fill-opacity=".45"/>
<rect x="787.72" y="244.45" width="0.83" height="1.4" fill="#d4d4d4" fill-opacity=".45"/>
<rect x="788.70" y="244.45" width="4.75" height="1.4" fill="#dcdcaa"/>
<rect x="793.60" y="244.45" width="0.83" height="1.4" fill="#ffd700" fill-opacity=".45"/>
<rect x="794.58" y="244.45" width="4.75" height="1.4" fill="#9cdcfe"/>
<rect x="800.46" y="244.45" width="0.83" height="1.4" fill="#d4d4d4" fill-opacity=".45"/>
<rect x="801.44" y="244.45" width="0.83" height="1.4" fill="#d4d4d4" fill-opacity=".45"/>
<rect x="803.40" y="244.45" width="6.71" height="1.4" fill="#9cdcfe"/>
<rect x="810.26" y="244.45" width="0.83" height="1.4" fill="#d4d4d4" fill-opacity=".45"/>
<rect x="811.24" y="244.45" width="4.75" height="1.4" fill="#dcdcaa"/>
<rect x="816.14" y="244.45" width="0.83" height="1.4" fill="#ffd700" fill-opacity=".45"/>
<rect x="817.12" y="244.45" width="0.83" height="1.4" fill="#9cdcfe"/>
<rect x="765.18" y="246.45" width="0.83" height="1.4" fill="#ffd700" fill-opacity=".45"/>
<rect x="763.22" y="248.45" width="0.83" height="1.4" fill="#ffd700" fill-opacity=".45"/>
<rect x="764.20" y="248.45" width="0.83" height="1.4" fill="#d4d4d4" fill-opacity=".45"/>
<rect x="761.26" y="250.45" width="0.83" height="1.4" fill="#ffd700" fill-opacity=".45"/>
<rect x="762.24" y="250.45" width="0.83" height="1.4" fill="#ffd700" fill-opacity=".45"/>
<rect x="763.22" y="250.45" width="0.83" height="1.4" fill="#d4d4d4" fill-opacity=".45"/>
<rect x="759.30" y="252.45" width="0.83" height="1.4" fill="#ffd700" fill-opacity=".45"/>
<rect x="759.30" y="256.45" width="7.69" height="1.4" fill="#569cd6"/>
<rect x="768.12" y="256.45" width="8.67" height="1.4" fill="#dcdcaa"/>
<rect x="776.94" y="256.45" width="0.83" height="1.4" fill="#ffd700" fill-opacity=".45"/>
<rect x="777.92" y="256.45" width="0.83" height="1.4" fill="#ffd700" fill-opacity=".45"/>
<rect x="779.88" y="256.45" width="0.83" height="1.4" fill="#ffd700" fill-opacity=".45"/>
<rect x="761.26" y="258.45" width="2.79" height="1.4" fill="#569cd6"/>
<rect x="765.18" y="258.45" width="2.79" height="1.4" fill="#9cdcfe"/>
<rect x="769.10" y="258.45" width="0.83" height="1.4" fill="#d4d4d4" fill-opacity=".45"/>
<rect x="771.06" y="258.45" width="7.69" height="1.4" fill="#9cdcfe"/>
<rect x="778.90" y="258.45" width="0.83" height="1.4" fill="#d4d4d4" fill-opacity=".45"/>
<rect x="779.88" y="258.45" width="12.59" height="1.4" fill="#dcdcaa"/>
<rect x="792.62" y="258.45" width="0.83" height="1.4" fill="#ffd700" fill-opacity=".45"/>
<rect x="793.60" y="258.45" width="4.75" height="1.4" fill="#ce9178"/>
<rect x="798.50" y="258.45" width="0.83" height="1.4" fill="#ffd700" fill-opacity=".45"/>
<rect x="799.48" y="258.45" width="0.83" height="1.4" fill="#d4d4d4" fill-opacity=".45"/>
<rect x="761.26" y="260.45" width="2.79" height="1.4" fill="#9cdcfe"/>
<rect x="764.20" y="260.45" width="0.83" height="1.4" fill="#d4d4d4" fill-opacity=".45"/>
<rect x="765.18" y="260.45" width="8.67" height="1.4" fill="#9cdcfe"/>
<rect x="774.98" y="260.45" width="0.83" height="1.4" fill="#d4d4d4" fill-opacity=".45"/>
<rect x="776.94" y="260.45" width="2.79" height="1.4" fill="#569cd6"/>
<rect x="780.86" y="260.45" width="0.83" height="1.4" fill="#d4d4d4" fill-opacity=".45"/>
<rect x="782.82" y="260.45" width="3.77" height="1.4" fill="#ce9178"/>
<rect x="786.74" y="260.45" width="0.83" height="1.4" fill="#d4d4d4" fill-opacity=".45"/>
<rect x="761.26" y="264.45" width="2.79" height="1.4" fill="#569cd6"/>
<rect x="765.18" y="264.45" width="2.79" height="1.4" fill="#9cdcfe"/>
<rect x="769.10" y="264.45" width="0.83" height="1.4" fill="#d4d4d4" fill-opacity=".45"/>
<rect x="771.06" y="264.45" width="7.69" height="1.4" fill="#9cdcfe"/>
<rect x="778.90" y="264.45" width="0.83" height="1.4" fill="#d4d4d4" fill-opacity=".45"/>
<rect x="779.88" y="264.45" width="12.59" height="1.4" fill="#dcdcaa"/>
<rect x="792.62" y="264.45" width="0.83" height="1.4" fill="#ffd700" fill-opacity=".45"/>
<rect x="793.60" y="264.45" width="4.75" height="1.4" fill="#ce9178"/>
<rect x="798.50" y="264.45" width="0.83" height="1.4" fill="#ffd700" fill-opacity=".45"/>
<rect x="799.48" y="264.45" width="0.83" height="1.4" fill="#d4d4d4" fill-opacity=".45"/>
<rect x="761.26" y="266.45" width="2.79" height="1.4" fill="#569cd6"/>
<rect x="765.18" y="266.45" width="4.75" height="1.4" fill="#9cdcfe"/>
<rect x="771.06" y="266.45" width="0.83" height="1.4" fill="#d4d4d4" fill-opacity=".45"/>
<rect x="773.02" y="266.45" width="0.83" height="1.4" fill="#ffd700" fill-opacity=".45"/>
<rect x="763.22" y="268.45" width="6.71" height="1.4" fill="#9cdcfe"/>
<rect x="770.08" y="268.45" width="0.83" height="1.4" fill="#d4d4d4" fill-opacity=".45"/>
<rect x="772.04" y="268.45" width="45.91" height="1.4" fill="#ce9178"/>
<rect x="763.22" y="270.45" width="4.75" height="1.4" fill="#9cdcfe"/>
<rect x="768.12" y="270.45" width="0.83" height="1.4" fill="#d4d4d4" fill-opacity=".45"/>
<rect x="770.08" y="270.45" width="47.87" height="1.4" fill="#ce9178"/>
<rect x="761.26" y="272.45" width="0.83" height="1.4" fill="#ffd700" fill-opacity=".45"/>
<rect x="762.24" y="272.45" width="0.83" height="1.4" fill="#d4d4d4" fill-opacity=".45"/>
<rect x="761.26" y="274.45" width="2.79" height="1.4" fill="#9cdcfe"/>
<rect x="764.20" y="274.45" width="0.83" height="1.4" fill="#d4d4d4" fill-opacity=".45"/>
<rect x="765.18" y="274.45" width="1.81" height="1.4" fill="#9cdcfe"/>
<rect x="768.12" y="274.45" width="0.83" height="1.4" fill="#d4d4d4" fill-opacity=".45"/>
<rect x="770.08" y="274.45" width="15.53" height="1.4" fill="#ce9178"/>
<rect x="785.76" y="274.45" width="0.83" height="1.4" fill="#d4d4d4" fill-opacity=".45"/>
<rect x="761.26" y="278.45" width="2.79" height="1.4" fill="#569cd6"/>
<rect x="765.18" y="278.45" width="3.77" height="1.4" fill="#9cdcfe"/>
<rect x="770.08" y="278.45" width="0.83" height="1.4" fill="#d4d4d4" fill-opacity=".45"/>
<rect x="772.04" y="278.45" width="7.69" height="1.4" fill="#9cdcfe"/>
<rect x="779.88" y="278.45" width="0.83" height="1.4" fill="#d4d4d4" fill-opacity=".45"/>
<rect x="780.86" y="278.45" width="12.59" height="1.4" fill="#dcdcaa"/>
<rect x="793.60" y="278.45" width="0.83" height="1.4" fill="#ffd700" fill-opacity=".45"/>
<rect x="794.58" y="278.45" width="5.73" height="1.4" fill="#ce9178"/>
<rect x="800.46" y="278.45" width="0.83" height="1.4" fill="#ffd700" fill-opacity=".45"/>
<rect x="801.44" y="278.45" width="0.83" height="1.4" fill="#d4d4d4" fill-opacity=".45"/>
<rect x="761.26" y="282.45" width="3.77" height="1.4" fill="#9cdcfe"/>
<rect x="765.18" y="282.45" width="0.83" height="1.4" fill="#d4d4d4" fill-opacity=".45"/>
<rect x="766.16" y="282.45" width="8.67" height="1.4" fill="#9cdcfe"/>
<rect x="775.96" y="282.45" width="0.83" height="1.4" fill="#d4d4d4" fill-opacity=".45"/>
<rect x="777.92" y="282.45" width="2.79" height="1.4" fill="#9cdcfe"/>
<rect x="780.86" y="282.45" width="0.83" height="1.4" fill="#d4d4d4" fill-opacity=".45"/>
<rect x="781.84" y="282.45" width="1.81" height="1.4" fill="#9cdcfe"/>
<rect x="784.78" y="282.45" width="0.83" height="1.4" fill="#d4d4d4" fill-opacity=".45"/>
<rect x="786.74" y="282.45" width="2.79" height="1.4" fill="#ce9178"/>
<rect x="790.66" y="282.45" width="0.83" height="1.4" fill="#d4d4d4" fill-opacity=".45"/>
<rect x="792.62" y="282.45" width="8.67" height="1.4" fill="#ce9178"/>
<rect x="801.44" y="282.45" width="0.83" height="1.4" fill="#d4d4d4" fill-opacity=".45"/>
<rect x="761.26" y="286.45" width="2.79" height="1.4" fill="#9cdcfe"/>
<rect x="764.20" y="286.45" width="0.83" height="1.4" fill="#d4d4d4" fill-opacity=".45"/>
<rect x="765.18" y="286.45" width="10.63" height="1.4" fill="#dcdcaa"/>
<rect x="775.96" y="286.45" width="0.83" height="1.4" fill="#ffd700" fill-opacity=".45"/>
<rect x="776.94" y="286.45" width="3.77" height="1.4" fill="#9cdcfe"/>
<rect x="780.86" y="286.45" width="0.83" height="1.4" fill="#ffd700" fill-opacity=".45"/>
<rect x="781.84" y="286.45" width="0.83" height="1.4" fill="#d4d4d4" fill-opacity=".45"/>
<rect x="761.26" y="288.45" width="3.77" height="1.4" fill="#9cdcfe"/>
<rect x="765.18" y="288.45" width="0.83" height="1.4" fill="#d4d4d4" fill-opacity=".45"/>
<rect x="766.16" y="288.45" width="10.63" height="1.4" fill="#dcdcaa"/>
<rect x="776.94" y="288.45" width="0.83" height="1.4" fill="#ffd700" fill-opacity=".45"/>
<rect x="777.92" y="288.45" width="3.77" height="1.4" fill="#9cdcfe"/>
<rect x="781.84" y="288.45" width="0.83" height="1.4" fill="#ffd700" fill-opacity=".45"/>
<rect x="782.82" y="288.45" width="0.83" height="1.4" fill="#d4d4d4" fill-opacity=".45"/>
<rect x="783.80" y="288.45" width="0.83" height="1.4" fill="#d4d4d4" fill-opacity=".45"/>
<rect x="761.26" y="292.45" width="7.69" height="1.4" fill="#9cdcfe"/>
<rect x="769.10" y="292.45" width="0.83" height="1.4" fill="#d4d4d4" fill-opacity=".45"/>
<rect x="770.08" y="292.45" width="3.77" height="1.4" fill="#9cdcfe"/>
<rect x="774.00" y="292.45" width="0.83" height="1.4" fill="#d4d4d4" fill-opacity=".45"/>
<rect x="774.98" y="292.45" width="10.63" height="1.4" fill="#dcdcaa"/>
<rect x="785.76" y="292.45" width="0.83" height="1.4" fill="#ffd700" fill-opacity=".45"/>
<rect x="786.74" y="292.45" width="2.79" height="1.4" fill="#9cdcfe"/>
<rect x="789.68" y="292.45" width="0.83" height="1.4" fill="#ffd700" fill-opacity=".45"/>
<rect x="790.66" y="292.45" width="0.83" height="1.4" fill="#d4d4d4" fill-opacity=".45"/>
<rect x="761.26" y="296.45" width="2.79" height="1.4" fill="#9cdcfe"/>
<rect x="764.20" y="296.45" width="0.83" height="1.4" fill="#d4d4d4" fill-opacity=".45"/>
<rect x="765.18" y="296.45" width="6.71" height="1.4" fill="#9cdcfe"/>
<rect x="773.02" y="296.45" width="0.83" height="1.4" fill="#d4d4d4" fill-opacity=".45"/>
<rect x="774.98" y="296.45" width="0.83" height="1.4" fill="#ffd700" fill-opacity=".45"/>
<rect x="775.96" y="296.45" width="2.79" height="1.4" fill="#9cdcfe"/>
<rect x="778.90" y="296.45" width="0.83" height="1.4" fill="#ffd700" fill-opacity=".45"/>
<rect x="780.86" y="296.45" width="0.83" height="1.4" fill="#d4d4d4" fill-opacity=".45"/>
<rect x="781.84" y="296.45" width="0.83" height="1.4" fill="#d4d4d4" fill-opacity=".45"/>
<rect x="783.80" y="296.45" width="0.83" height="1.4" fill="#ffd700" fill-opacity=".45"/>
<rect x="763.22" y="298.45" width="2.79" height="1.4" fill="#569cd6"/>
<rect x="767.14" y="298.45" width="1.81" height="1.4" fill="#9cdcfe"/>
<rect x="770.08" y="298.45" width="0.83" height="1.4" fill="#d4d4d4" fill-opacity=".45"/>
<rect x="772.04" y="298.45" width="7.69" height="1.4" fill="#9cdcfe"/>
<rect x="779.88" y="298.45" width="0.83" height="1.4" fill="#d4d4d4" fill-opacity=".45"/>
<rect x="780.86" y="298.45" width="3.77" height="1.4" fill="#9cdcfe"/>
<rect x="784.78" y="298.45" width="0.83" height="1.4" fill="#d4d4d4" fill-opacity=".45"/>
<rect x="785.76" y="298.45" width="4.75" height="1.4" fill="#dcdcaa"/>
<rect x="790.66" y="298.45" width="0.83" height="1.4" fill="#ffd700" fill-opacity=".45"/>
<rect x="791.64" y="298.45" width="2.79" height="1.4" fill="#ce9178"/>
<rect x="794.58" y="298.45" width="0.83" height="1.4" fill="#ffd700" fill-opacity=".45"/>
<rect x="795.56" y="298.45" width="0.83" height="1.4" fill="#d4d4d4" fill-opacity=".45"/>
<rect x="796.54" y="298.45" width="2.79" height="1.4" fill="#dcdcaa"/>
<rect x="799.48" y="298.45" width="0.83" height="1.4" fill="#ffd700" fill-opacity=".45"/>
<rect x="800.46" y="298.45" width="0.83" height="1.4" fill="#ffd700" fill-opacity=".45"/>
<rect x="801.44" y="298.45" width="0.83" height="1.4" fill="#d4d4d4" fill-opacity=".45"/>
<rect x="763.22" y="300.45" width="2.79" height="1.4" fill="#9cdcfe"/>
<rect x="766.16" y="300.45" width="0.83" height="1.4" fill="#d4d4d4" fill-opacity=".45"/>
<rect x="767.14" y="300.45" width="4.75" height="1.4" fill="#9cdcfe"/>
<rect x="772.04" y="300.45" width="0.83" height="1.4" fill="#d4d4d4" fill-opacity=".45"/>
<rect x="773.02" y="300.45" width="6.71" height="1.4" fill="#9cdcfe"/>
<rect x="780.86" y="300.45" width="0.83" height="1.4" fill="#d4d4d4" fill-opacity=".45"/>
<rect x="782.82" y="300.45" width="15.53" height="1.4" fill="#ce9178"/>
<rect x="798.50" y="300.45" width="0.83" height="1.4" fill="#d4d4d4" fill-opacity=".45"/>
<rect x="800.46" y="300.45" width="6.71" height="1.4" fill="#dcdcaa"/>
<rect x="807.32" y="300.45" width="0.83" height="1.4" fill="#ffd700" fill-opacity=".45"/>
<rect x="808.30" y="300.45" width="1.81" height="1.4" fill="#9cdcfe"/>
<rect x="810.26" y="300.45" width="0.83" height="1.4" fill="#ffd700" fill-opacity=".45"/>
<rect x="811.24" y="300.45" width="0.83" height="1.4" fill="#d4d4d4" fill-opacity=".45"/>
<rect x="813.20" y="300.45" width="0.83" height="1.4" fill="#ffd700" fill-opacity=".45"/>
<rect x="765.18" y="302.45" width="7.69" height="1.4" fill="#9cdcfe"/>
<rect x="773.02" y="302.45" width="0.83" height="1.4" fill="#d4d4d4" fill-opacity=".45"/>
<rect x="774.00" y="302.45" width="3.77" height="1.4" fill="#9cdcfe"/>
<rect x="777.92" y="302.45" width="0.83" height="1.4" fill="#d4d4d4" fill-opacity=".45"/>
<rect x="778.90" y="302.45" width="10.63" height="1.4" fill="#dcdcaa"/>
<rect x="789.68" y="302.45" width="0.83" height="1.4" fill="#ffd700" fill-opacity=".45"/>
<rect x="790.66" y="302.45" width="2.79" height="1.4" fill="#9cdcfe"/>
<rect x="793.60" y="302.45" width="0.83" height="1.4" fill="#ffd700" fill-opacity=".45"/>
<rect x="795.56" y="302.45" width="0.83" height="1.4" fill="#d4d4d4" fill-opacity=".45"/>
<rect x="796.54" y="302.45" width="0.83" height="1.4" fill="#d4d4d4" fill-opacity=".45"/>
<rect x="798.50" y="302.45" width="7.69" height="1.4" fill="#9cdcfe"/>
<rect x="806.34" y="302.45" width="0.83" height="1.4" fill="#d4d4d4" fill-opacity=".45"/>
<rect x="807.32" y="302.45" width="3.77" height="1.4" fill="#9cdcfe"/>
<rect x="811.24" y="302.45" width="0.83" height="1.4" fill="#d4d4d4" fill-opacity=".45"/>
<rect x="812.22" y="302.45" width="5.73" height="1.4" fill="#dcdcaa"/>
<rect x="763.22" y="304.45" width="0.83" height="1.4" fill="#ffd700" fill-opacity=".45"/>
<rect x="761.26" y="306.45" width="0.83" height="1.4" fill="#ffd700" fill-opacity=".45"/>
<rect x="762.24" y="306.45" width="0.83" height="1.4" fill="#d4d4d4" fill-opacity=".45"/>
<rect x="764.20" y="306.45" width="3.77" height="1.4" fill="#b5cea8"/>
<rect x="768.12" y="306.45" width="0.83" height="1.4" fill="#ffd700" fill-opacity=".45"/>
<rect x="769.10" y="306.45" width="0.83" height="1.4" fill="#d4d4d4" fill-opacity=".45"/>
<rect x="759.30" y="308.45" width="0.83" height="1.4" fill="#ffd700" fill-opacity=".45"/>
<rect x="759.30" y="312.45" width="4.75" height="1.4" fill="#ff5a3c"/>
<rect x="765.18" y="312.45" width="21.41" height="1.4" fill="#ff5a3c"/>
<rect x="787.72" y="312.45" width="0.83" height="1.4" fill="#ff5a3c" fill-opacity=".45"/>
<rect x="789.68" y="312.45" width="7.69" height="1.4" fill="#ff5a3c"/>
<rect x="797.52" y="312.45" width="0.83" height="1.4" fill="#ff5a3c" fill-opacity=".45"/>
<rect x="798.50" y="312.45" width="7.69" height="1.4" fill="#ff5a3c"/>
<rect x="806.34" y="312.45" width="0.83" height="1.4" fill="#ff5a3c" fill-opacity=".45"/>
<rect x="808.30" y="312.45" width="7.69" height="1.4" fill="#ff5a3c"/>
<rect x="816.14" y="312.45" width="0.83" height="1.4" fill="#ff5a3c" fill-opacity=".45"/>
<rect x="761.26" y="314.45" width="2.79" height="1.4" fill="#569cd6"/>
<rect x="765.18" y="314.45" width="2.79" height="1.4" fill="#9cdcfe"/>
<rect x="769.10" y="314.45" width="0.83" height="1.4" fill="#d4d4d4" fill-opacity=".45"/>
<rect x="771.06" y="314.45" width="3.77" height="1.4" fill="#9cdcfe"/>
<rect x="774.98" y="314.45" width="0.83" height="1.4" fill="#d4d4d4" fill-opacity=".45"/>
<rect x="775.96" y="314.45" width="4.75" height="1.4" fill="#dcdcaa"/>
<rect x="780.86" y="314.45" width="0.83" height="1.4" fill="#ffd700" fill-opacity=".45"/>
<rect x="781.84" y="314.45" width="7.69" height="1.4" fill="#9cdcfe"/>
<rect x="789.68" y="314.45" width="0.83" height="1.4" fill="#d4d4d4" fill-opacity=".45"/>
<rect x="790.66" y="314.45" width="3.77" height="1.4" fill="#9cdcfe"/>
<rect x="795.56" y="314.45" width="0.83" height="1.4" fill="#d4d4d4" fill-opacity=".45"/>
<rect x="796.54" y="314.45" width="0.83" height="1.4" fill="#d4d4d4" fill-opacity=".45"/>
<rect x="798.50" y="314.45" width="0.83" height="1.4" fill="#ffd700" fill-opacity=".45"/>
<rect x="799.48" y="314.45" width="0.83" height="1.4" fill="#ffd700" fill-opacity=".45"/>
<rect x="800.46" y="314.45" width="0.83" height="1.4" fill="#ffd700" fill-opacity=".45"/>
<rect x="801.44" y="314.45" width="0.83" height="1.4" fill="#d4d4d4" fill-opacity=".45"/>
<rect x="761.26" y="316.45" width="6.71" height="1.4" fill="#9cdcfe"/>
<rect x="768.12" y="316.45" width="0.83" height="1.4" fill="#d4d4d4" fill-opacity=".45"/>
<rect x="769.10" y="316.45" width="4.75" height="1.4" fill="#9cdcfe"/>
<rect x="774.98" y="316.45" width="0.83" height="1.4" fill="#d4d4d4" fill-opacity=".45"/>
<rect x="776.94" y="316.45" width="2.79" height="1.4" fill="#9cdcfe"/>
<rect x="779.88" y="316.45" width="0.83" height="1.4" fill="#d4d4d4" fill-opacity=".45"/>
<rect x="780.86" y="316.45" width="4.75" height="1.4" fill="#9cdcfe"/>
<rect x="786.74" y="316.45" width="0.83" height="1.4" fill="#d4d4d4" fill-opacity=".45"/>
<rect x="787.72" y="316.45" width="0.83" height="1.4" fill="#d4d4d4" fill-opacity=".45"/>
<rect x="789.68" y="316.45" width="6.71" height="1.4" fill="#9cdcfe"/>
<rect x="796.54" y="316.45" width="0.83" height="1.4" fill="#d4d4d4" fill-opacity=".45"/>
<rect x="797.52" y="316.45" width="3.77" height="1.4" fill="#9cdcfe"/>
<rect x="801.44" y="316.45" width="0.83" height="1.4" fill="#d4d4d4" fill-opacity=".45"/>
<rect x="761.26" y="318.45" width="6.71" height="1.4" fill="#9cdcfe"/>
<rect x="768.12" y="318.45" width="0.83" height="1.4" fill="#d4d4d4" fill-opacity=".45"/>
<rect x="769.10" y="318.45" width="4.75" height="1.4" fill="#9cdcfe"/>
<rect x="774.98" y="318.45" width="0.83" height="1.4" fill="#d4d4d4" fill-opacity=".45"/>
<rect x="776.94" y="318.45" width="2.79" height="1.4" fill="#9cdcfe"/>
<rect x="779.88" y="318.45" width="0.83" height="1.4" fill="#d4d4d4" fill-opacity=".45"/>
<rect x="780.86" y="318.45" width="4.75" height="1.4" fill="#9cdcfe"/>
<rect x="786.74" y="318.45" width="0.83" height="1.4" fill="#d4d4d4" fill-opacity=".45"/>
<rect x="787.72" y="318.45" width="0.83" height="1.4" fill="#d4d4d4" fill-opacity=".45"/>
<rect x="789.68" y="318.45" width="6.71" height="1.4" fill="#9cdcfe"/>
<rect x="796.54" y="318.45" width="0.83" height="1.4" fill="#d4d4d4" fill-opacity=".45"/>
<rect x="797.52" y="318.45" width="3.77" height="1.4" fill="#9cdcfe"/>
<rect x="801.44" y="318.45" width="0.83" height="1.4" fill="#d4d4d4" fill-opacity=".45"/>
<rect x="761.26" y="320.45" width="5.73" height="1.4" fill="#569cd6"/>
<rect x="768.12" y="320.45" width="2.79" height="1.4" fill="#9cdcfe"/>
<rect x="771.06" y="320.45" width="0.83" height="1.4" fill="#d4d4d4" fill-opacity=".45"/>
<rect x="759.30" y="322.45" width="0.83" height="1.4" fill="#ffd700" fill-opacity=".45"/>
<rect x="760.28" y="322.45" width="0.83" height="1.4" fill="#d4d4d4" fill-opacity=".45"/>
<rect x="759.30" y="326.45" width="2.79" height="1.4" fill="#569cd6"/>
<rect x="763.22" y="326.45" width="12.59" height="1.4" fill="#9cdcfe"/>
<rect x="776.94" y="326.45" width="0.83" height="1.4" fill="#d4d4d4" fill-opacity=".45"/>
<rect x="778.90" y="326.45" width="0.83" height="1.4" fill="#ffd700" fill-opacity=".45"/>
<rect x="779.88" y="326.45" width="9.65" height="1.4" fill="#9cdcfe"/>
<rect x="789.68" y="326.45" width="0.83" height="1.4" fill="#ffd700" fill-opacity=".45"/>
<rect x="791.64" y="326.45" width="0.83" height="1.4" fill="#d4d4d4" fill-opacity=".45"/>
<rect x="792.62" y="326.45" width="0.83" height="1.4" fill="#d4d4d4" fill-opacity=".45"/>
<rect x="794.58" y="326.45" width="0.83" height="1.4" fill="#ffd700" fill-opacity=".45"/>
<rect x="761.26" y="328.45" width="2.79" height="1.4" fill="#569cd6"/>
<rect x="765.18" y="328.45" width="7.69" height="1.4" fill="#9cdcfe"/>
<rect x="774.00" y="328.45" width="0.83" height="1.4" fill="#d4d4d4" fill-opacity=".45"/>
<rect x="775.96" y="328.45" width="3.77" height="1.4" fill="#9cdcfe"/>
<rect x="779.88" y="328.45" width="0.83" height="1.4" fill="#d4d4d4" fill-opacity=".45"/>
<rect x="780.86" y="328.45" width="6.71" height="1.4" fill="#dcdcaa"/>
<rect x="787.72" y="328.45" width="0.83" height="1.4" fill="#ffd700" fill-opacity=".45"/>
<rect x="788.70" y="328.45" width="5.73" height="1.4" fill="#9cdcfe"/>
<rect x="794.58" y="328.45" width="0.83" height="1.4" fill="#d4d4d4" fill-opacity=".45"/>
<rect x="796.54" y="328.45" width="0.83" height="1.4" fill="#ffd700" fill-opacity=".45"/>
<rect x="797.52" y="328.45" width="0.83" height="1.4" fill="#ffd700" fill-opacity=".45"/>
<rect x="761.26" y="330.45" width="2.79" height="1.4" fill="#569cd6"/>
<rect x="765.18" y="330.45" width="8.67" height="1.4" fill="#9cdcfe"/>
<rect x="774.98" y="330.45" width="0.83" height="1.4" fill="#d4d4d4" fill-opacity=".45"/>
<rect x="776.94" y="330.45" width="7.69" height="1.4" fill="#9cdcfe"/>
<rect x="784.78" y="330.45" width="0.83" height="1.4" fill="#d4d4d4" fill-opacity=".45"/>
<rect x="785.76" y="330.45" width="3.77" height="1.4" fill="#dcdcaa"/>
<rect x="789.68" y="330.45" width="0.83" height="1.4" fill="#ffd700" fill-opacity=".45"/>
<rect x="790.66" y="330.45" width="2.79" height="1.4" fill="#9cdcfe"/>
<rect x="794.58" y="330.45" width="0.83" height="1.4" fill="#d4d4d4" fill-opacity=".45"/>
<rect x="795.56" y="330.45" width="0.83" height="1.4" fill="#d4d4d4" fill-opacity=".45"/>
<rect x="797.52" y="330.45" width="2.79" height="1.4" fill="#9cdcfe"/>
<rect x="800.46" y="330.45" width="0.83" height="1.4" fill="#ffd700" fill-opacity=".45"/>
<rect x="802.42" y="330.45" width="0.83" height="1.4" fill="#d4d4d4" fill-opacity=".45"/>
<rect x="803.40" y="330.45" width="0.83" height="1.4" fill="#d4d4d4" fill-opacity=".45"/>
<rect x="805.36" y="330.45" width="0.83" height="1.4" fill="#b5cea8"/>
<rect x="806.34" y="330.45" width="0.83" height="1.4" fill="#d4d4d4" fill-opacity=".45"/>
<rect x="761.26" y="332.45" width="5.73" height="1.4" fill="#569cd6"/>
<rect x="768.12" y="332.45" width="7.69" height="1.4" fill="#9cdcfe"/>
<rect x="775.96" y="332.45" width="0.83" height="1.4" fill="#d4d4d4" fill-opacity=".45"/>
<rect x="776.94" y="332.45" width="3.77" height="1.4" fill="#dcdcaa"/>
<rect x="780.86" y="332.45" width="0.83" height="1.4" fill="#ffd700" fill-opacity=".45"/>
<rect x="781.84" y="332.45" width="1.81" height="1.4" fill="#9cdcfe"/>
<rect x="784.78" y="332.45" width="0.83" height="1.4" fill="#d4d4d4" fill-opacity=".45"/>
<rect x="785.76" y="332.45" width="0.83" height="1.4" fill="#d4d4d4" fill-opacity=".45"/>
<rect x="787.72" y="332.45" width="1.81" height="1.4" fill="#9cdcfe"/>
<rect x="789.68" y="332.45" width="0.83" height="1.4" fill="#d4d4d4" fill-opacity=".45"/>
<rect x="790.66" y="332.45" width="6.71" height="1.4" fill="#dcdcaa"/>
<rect x="797.52" y="332.45" width="0.83" height="1.4" fill="#ffd700" fill-opacity=".45"/>
<rect x="798.50" y="332.45" width="0.83" height="1.4" fill="#d4d4d4" fill-opacity=".45"/>
<rect x="799.48" y="332.45" width="5.73" height="1.4" fill="#9cdcfe"/>
<rect x="806.34" y="332.45" width="0.83" height="1.4" fill="#d4d4d4" fill-opacity=".45"/>
<rect x="807.32" y="332.45" width="0.83" height="1.4" fill="#9cdcfe"/>
<rect x="808.30" y="332.45" width="0.83" height="1.4" fill="#d4d4d4" fill-opacity=".45"/>
<rect x="810.26" y="332.45" width="1.81" height="1.4" fill="#ce9178"/>
<rect x="812.22" y="332.45" width="0.83" height="1.4" fill="#ffd700" fill-opacity=".45"/>
<rect x="814.18" y="332.45" width="0.83" height="1.4" fill="#d4d4d4" fill-opacity=".45"/>
<rect x="816.14" y="332.45" width="1.81" height="1.4" fill="#9cdcfe"/>
<rect x="759.30" y="334.45" width="0.83" height="1.4" fill="#ffd700" fill-opacity=".45"/>
<rect x="760.28" y="334.45" width="0.83" height="1.4" fill="#d4d4d4" fill-opacity=".45"/>
<rect x="759.30" y="336.45" width="2.79" height="1.4" fill="#569cd6"/>
<rect x="763.22" y="336.45" width="11.61" height="1.4" fill="#9cdcfe"/>
<rect x="775.96" y="336.45" width="0.83" height="1.4" fill="#d4d4d4" fill-opacity=".45"/>
<rect x="777.92" y="336.45" width="0.83" height="1.4" fill="#ffd700" fill-opacity=".45"/>
<rect x="778.90" y="336.45" width="9.65" height="1.4" fill="#9cdcfe"/>
<rect x="788.70" y="336.45" width="0.83" height="1.4" fill="#ffd700" fill-opacity=".45"/>
<rect x="790.66" y="336.45" width="0.83" height="1.4" fill="#d4d4d4" fill-opacity=".45"/>
<rect x="791.64" y="336.45" width="0.83" height="1.4" fill="#d4d4d4" fill-opacity=".45"/>
<rect x="793.60" y="336.45" width="0.83" height="1.4" fill="#ffd700" fill-opacity=".45"/>
<rect x="761.26" y="338.45" width="5.73" height="1.4" fill="#569cd6"/>
<rect x="768.12" y="338.45" width="0.83" height="1.4" fill="#ffd700" fill-opacity=".45"/>
<rect x="764.20" y="340.45" width="5.73" height="1.4" fill="#9cdcfe"/>
<rect x="770.08" y="340.45" width="0.83" height="1.4" fill="#d4d4d4" fill-opacity=".45"/>
<rect x="772.04" y="340.45" width="7.69" height="1.4" fill="#569cd6"/>
<rect x="779.88" y="340.45" width="0.83" height="1.4" fill="#ffd700" fill-opacity=".45"/>
<rect x="780.86" y="340.45" width="2.79" height="1.4" fill="#9cdcfe"/>
<rect x="783.80" y="340.45" width="0.83" height="1.4" fill="#ffd700" fill-opacity=".45"/>
<rect x="785.76" y="340.45" width="0.83" height="1.4" fill="#ffd700" fill-opacity=".45"/>
<rect x="787.72" y="340.45" width="0.83" height="1.4" fill="#ffd700" fill-opacity=".45"/>
<rect x="765.18" y="342.45" width="2.79" height="1.4" fill="#569cd6"/>
<rect x="769.10" y="342.45" width="3.77" height="1.4" fill="#9cdcfe"/>
<rect x="774.00" y="342.45" width="0.83" height="1.4" fill="#d4d4d4" fill-opacity=".45"/>
<rect x="775.96" y="342.45" width="7.69" height="1.4" fill="#9cdcfe"/>
<rect x="783.80" y="342.45" width="0.83" height="1.4" fill="#d4d4d4" fill-opacity=".45"/>
<rect x="784.78" y="342.45" width="3.77" height="1.4" fill="#9cdcfe"/>
<rect x="788.70" y="342.45" width="0.83" height="1.4" fill="#d4d4d4" fill-opacity=".45"/>
<rect x="789.68" y="342.45" width="8.67" height="1.4" fill="#9cdcfe"/>
<rect x="798.50" y="342.45" width="0.83" height="1.4" fill="#d4d4d4" fill-opacity=".45"/>
<rect x="765.18" y="344.45" width="5.73" height="1.4" fill="#569cd6"/>
<rect x="772.04" y="344.45" width="2.79" height="1.4" fill="#569cd6"/>
<rect x="775.96" y="344.45" width="0.83" height="1.4" fill="#d4d4d4" fill-opacity=".45"/>
<rect x="777.92" y="344.45" width="3.77" height="1.4" fill="#9cdcfe"/>
<rect x="781.84" y="344.45" width="0.83" height="1.4" fill="#d4d4d4" fill-opacity=".45"/>
<rect x="782.82" y="344.45" width="8.67" height="1.4" fill="#9cdcfe"/>
<rect x="791.64" y="344.45" width="0.83" height="1.4" fill="#d4d4d4" fill-opacity=".45"/>
<rect x="792.62" y="344.45" width="6.71" height="1.4" fill="#dcdcaa"/>
<rect x="799.48" y="344.45" width="0.83" height="1.4" fill="#ffd700" fill-opacity=".45"/>
<rect x="800.46" y="344.45" width="7.69" height="1.4" fill="#ce9178"/>
<rect x="808.30" y="344.45" width="0.83" height="1.4" fill="#d4d4d4" fill-opacity=".45"/>
<rect x="810.26" y="344.45" width="4.75" height="1.4" fill="#ce9178"/>
<rect x="815.16" y="344.45" width="0.83" height="1.4" fill="#ffd700" fill-opacity=".45"/>
<rect x="816.14" y="344.45" width="0.83" height="1.4" fill="#d4d4d4" fill-opacity=".45"/>
<rect x="817.12" y="344.45" width="0.83" height="1.4" fill="#9cdcfe"/>
<rect x="763.22" y="346.45" width="0.83" height="1.4" fill="#ffd700" fill-opacity=".45"/>
<rect x="764.20" y="346.45" width="0.83" height="1.4" fill="#d4d4d4" fill-opacity=".45"/>
<rect x="764.20" y="348.45" width="4.75" height="1.4" fill="#9cdcfe"/>
<rect x="769.10" y="348.45" width="0.83" height="1.4" fill="#d4d4d4" fill-opacity=".45"/>
<rect x="771.06" y="348.45" width="7.69" height="1.4" fill="#569cd6"/>
<rect x="778.90" y="348.45" width="0.83" height="1.4" fill="#ffd700" fill-opacity=".45"/>
<rect x="779.88" y="348.45" width="0.83" height="1.4" fill="#9cdcfe"/>
<rect x="780.86" y="348.45" width="0.83" height="1.4" fill="#ffd700" fill-opacity=".45"/>
<rect x="782.82" y="348.45" width="0.83" height="1.4" fill="#ffd700" fill-opacity=".45"/>
<rect x="765.18" y="350.45" width="2.79" height="1.4" fill="#9cdcfe"/>
<rect x="768.12" y="350.45" width="0.83" height="1.4" fill="#d4d4d4" fill-opacity=".45"/>
<rect x="769.10" y="350.45" width="3.77" height="1.4" fill="#9cdcfe"/>
<rect x="773.02" y="350.45" width="0.83" height="1.4" fill="#d4d4d4" fill-opacity=".45"/>
<rect x="765.18" y="352.45" width="2.79" height="1.4" fill="#9cdcfe"/>
<rect x="768.12" y="352.45" width="0.83" height="1.4" fill="#d4d4d4" fill-opacity=".45"/>
<rect x="769.10" y="352.45" width="2.79" height="1.4" fill="#dcdcaa"/>
<rect x="772.04" y="352.45" width="0.83" height="1.4" fill="#ffd700" fill-opacity=".45"/>
<rect x="773.02" y="352.45" width="7.69" height="1.4" fill="#ce9178"/>
<rect x="780.86" y="352.45" width="0.83" height="1.4" fill="#d4d4d4" fill-opacity=".45"/>
<rect x="782.82" y="352.45" width="6.71" height="1.4" fill="#ce9178"/>
<rect x="789.68" y="352.45" width="0.83" height="1.4" fill="#ffd700" fill-opacity=".45"/>
<rect x="790.66" y="352.45" width="0.83" height="1.4" fill="#d4d4d4" fill-opacity=".45"/>
<rect x="791.64" y="352.45" width="2.79" height="1.4" fill="#dcdcaa"/>
<rect x="794.58" y="352.45" width="0.83" height="1.4" fill="#ffd700" fill-opacity=".45"/>
<rect x="795.56" y="352.45" width="6.71" height="1.4" fill="#ce9178"/>
<rect x="802.42" y="352.45" width="0.83" height="1.4" fill="#d4d4d4" fill-opacity=".45"/>
<rect x="804.38" y="352.45" width="4.75" height="1.4" fill="#ce9178"/>
<rect x="809.28" y="352.45" width="0.83" height="1.4" fill="#ffd700" fill-opacity=".45"/>
<rect x="810.26" y="352.45" width="0.83" height="1.4" fill="#d4d4d4" fill-opacity=".45"/>
<rect x="763.22" y="354.45" width="0.83" height="1.4" fill="#ffd700" fill-opacity=".45"/>
<rect x="764.20" y="354.45" width="0.83" height="1.4" fill="#d4d4d4" fill-opacity=".45"/>
<rect x="764.20" y="356.45" width="4.75" height="1.4" fill="#9cdcfe"/>
<rect x="769.10" y="356.45" width="0.83" height="1.4" fill="#d4d4d4" fill-opacity=".45"/>
<rect x="771.06" y="356.45" width="7.69" height="1.4" fill="#569cd6"/>
<rect x="778.90" y="356.45" width="0.83" height="1.4" fill="#ffd700" fill-opacity=".45"/>
<rect x="779.88" y="356.45" width="0.83" height="1.4" fill="#9cdcfe"/>
<rect x="780.86" y="356.45" width="0.83" height="1.4" fill="#ffd700" fill-opacity=".45"/>
<rect x="782.82" y="356.45" width="0.83" height="1.4" fill="#ffd700" fill-opacity=".45"/>
<rect x="765.18" y="358.45" width="2.79" height="1.4" fill="#9cdcfe"/>
<rect x="768.12" y="358.45" width="0.83" height="1.4" fill="#d4d4d4" fill-opacity=".45"/>
<rect x="769.10" y="358.45" width="3.77" height="1.4" fill="#dcdcaa"/>
<rect x="773.02" y="358.45" width="0.83" height="1.4" fill="#ffd700" fill-opacity=".45"/>
<rect x="774.00" y="358.45" width="4.75" height="1.4" fill="#9cdcfe"/>
<rect x="778.90" y="358.45" width="0.83" height="1.4" fill="#ffd700" fill-opacity=".45"/>
<rect x="779.88" y="358.45" width="0.83" height="1.4" fill="#d4d4d4" fill-opacity=".45"/>
<rect x="765.18" y="360.45" width="2.79" height="1.4" fill="#9cdcfe"/>
<rect x="768.12" y="360.45" width="0.83" height="1.4" fill="#d4d4d4" fill-opacity=".45"/>
<rect x="769.10" y="360.45" width="2.79" height="1.4" fill="#dcdcaa"/>
<rect x="772.04" y="360.45" width="0.83" height="1.4" fill="#ffd700" fill-opacity=".45"/>
<rect x="773.02" y="360.45" width="8.67" height="1.4" fill="#ce9178"/>
<rect x="781.84" y="360.45" width="0.83" height="1.4" fill="#d4d4d4" fill-opacity=".45"/>
<rect x="783.80" y="360.45" width="2.79" height="1.4" fill="#ce9178"/>
<rect x="786.74" y="360.45" width="0.83" height="1.4" fill="#ffd700" fill-opacity=".45"/>
<rect x="787.72" y="360.45" width="0.83" height="1.4" fill="#d4d4d4" fill-opacity=".45"/>
<rect x="788.70" y="360.45" width="2.79" height="1.4" fill="#dcdcaa"/>
<rect x="791.64" y="360.45" width="0.83" height="1.4" fill="#ffd700" fill-opacity=".45"/>
<rect x="792.62" y="360.45" width="6.71" height="1.4" fill="#ce9178"/>
<rect x="799.48" y="360.45" width="0.83" height="1.4" fill="#d4d4d4" fill-opacity=".45"/>
<rect x="801.44" y="360.45" width="5.73" height="1.4" fill="#ce9178"/>
<rect x="807.32" y="360.45" width="0.83" height="1.4" fill="#ffd700" fill-opacity=".45"/>
<rect x="808.30" y="360.45" width="0.83" height="1.4" fill="#d4d4d4" fill-opacity=".45"/>
<rect x="763.22" y="362.45" width="0.83" height="1.4" fill="#ffd700" fill-opacity=".45"/>
<rect x="764.20" y="362.45" width="0.83" height="1.4" fill="#ffd700" fill-opacity=".45"/>
<rect x="765.18" y="362.45" width="0.83" height="1.4" fill="#d4d4d4" fill-opacity=".45"/>
<rect x="759.30" y="364.45" width="0.83" height="1.4" fill="#ffd700" fill-opacity=".45"/>
<rect x="760.28" y="364.45" width="0.83" height="1.4" fill="#d4d4d4" fill-opacity=".45"/>
<rect x="759.30" y="368.45" width="7.69" height="1.4" fill="#9cdcfe"/>
<rect x="767.14" y="368.45" width="0.83" height="1.4" fill="#d4d4d4" fill-opacity=".45"/>
<rect x="768.12" y="368.45" width="15.53" height="1.4" fill="#dcdcaa"/>
<rect x="783.80" y="368.45" width="0.83" height="1.4" fill="#ffd700" fill-opacity=".45"/>
<rect x="784.78" y="368.45" width="17.49" height="1.4" fill="#ce9178"/>
<rect x="802.42" y="368.45" width="0.83" height="1.4" fill="#d4d4d4" fill-opacity=".45"/>
<rect x="804.38" y="368.45" width="7.69" height="1.4" fill="#569cd6"/>
<rect x="813.20" y="368.45" width="0.83" height="1.4" fill="#ffd700" fill-opacity=".45"/>
<rect x="814.18" y="368.45" width="0.83" height="1.4" fill="#ffd700" fill-opacity=".45"/>
<rect x="816.14" y="368.45" width="0.83" height="1.4" fill="#ffd700" fill-opacity=".45"/>
<rect x="761.26" y="370.45" width="2.79" height="1.4" fill="#569cd6"/>
<rect x="765.18" y="370.45" width="8.67" height="1.4" fill="#9cdcfe"/>
<rect x="774.98" y="370.45" width="0.83" height="1.4" fill="#d4d4d4" fill-opacity=".45"/>
<rect x="776.94" y="370.45" width="0.83" height="1.4" fill="#ffd700" fill-opacity=".45"/>
<rect x="778.90" y="370.45" width="0.83" height="1.4" fill="#ffd700" fill-opacity=".45"/>
<rect x="780.86" y="370.45" width="0.83" height="1.4" fill="#d4d4d4" fill-opacity=".45"/>
<rect x="781.84" y="370.45" width="0.83" height="1.4" fill="#d4d4d4" fill-opacity=".45"/>
<rect x="783.80" y="370.45" width="3.77" height="1.4" fill="#569cd6"/>
<rect x="787.72" y="370.45" width="0.83" height="1.4" fill="#d4d4d4" fill-opacity=".45"/>
<rect x="761.26" y="374.45" width="2.79" height="1.4" fill="#569cd6"/>
<rect x="765.18" y="374.45" width="10.63" height="1.4" fill="#9cdcfe"/>
<rect x="776.94" y="374.45" width="0.83" height="1.4" fill="#d4d4d4" fill-opacity=".45"/>
<rect x="778.90" y="374.45" width="7.69" height="1.4" fill="#9cdcfe"/>
<rect x="786.74" y="374.45" width="0.83" height="1.4" fill="#d4d4d4" fill-opacity=".45"/>
<rect x="787.72" y="374.45" width="7.69" height="1.4" fill="#9cdcfe"/>
<rect x="795.56" y="374.45" width="0.83" height="1.4" fill="#d4d4d4" fill-opacity=".45"/>
<rect x="796.54" y="374.45" width="4.75" height="1.4" fill="#dcdcaa"/>
<rect x="801.44" y="374.45" width="0.83" height="1.4" fill="#ffd700" fill-opacity=".45"/>
<rect x="802.42" y="374.45" width="2.79" height="1.4" fill="#ce9178"/>
<rect x="805.36" y="374.45" width="0.83" height="1.4" fill="#ffd700" fill-opacity=".45"/>
<rect x="806.34" y="374.45" width="0.83" height="1.4" fill="#d4d4d4" fill-opacity=".45"/>
<rect x="761.26" y="378.45" width="2.79" height="1.4" fill="#569cd6"/>
<rect x="765.18" y="378.45" width="5.73" height="1.4" fill="#9cdcfe"/>
<rect x="772.04" y="378.45" width="0.83" height="1.4" fill="#d4d4d4" fill-opacity=".45"/>
<rect x="774.00" y="378.45" width="10.63" height="1.4" fill="#9cdcfe"/>
<rect x="784.78" y="378.45" width="0.83" height="1.4" fill="#d4d4d4" fill-opacity=".45"/>
<rect x="785.76" y="378.45" width="3.77" height="1.4" fill="#dcdcaa"/>
<rect x="789.68" y="378.45" width="0.83" height="1.4" fill="#ffd700" fill-opacity=".45"/>
<rect x="790.66" y="378.45" width="4.75" height="1.4" fill="#ce9178"/>
<rect x="795.56" y="378.45" width="0.83" height="1.4" fill="#d4d4d4" fill-opacity=".45"/>
<rect x="797.52" y="378.45" width="15.53" height="1.4" fill="#ce9178"/>
<rect x="813.20" y="378.45" width="0.83" height="1.4" fill="#d4d4d4" fill-opacity=".45"/>
<rect x="815.16" y="378.45" width="2.79" height="1.4" fill="#569cd6"/>
<rect x="761.26" y="380.45" width="10.63" height="1.4" fill="#9cdcfe"/>
<rect x="772.04" y="380.45" width="0.83" height="1.4" fill="#d4d4d4" fill-opacity=".45"/>
<rect x="773.02" y="380.45" width="15.53" height="1.4" fill="#dcdcaa"/>
<rect x="788.70" y="380.45" width="0.83" height="1.4" fill="#ffd700" fill-opacity=".45"/>
<rect x="789.68" y="380.45" width="0.83" height="1.4" fill="#9cdcfe"/>
<rect x="790.66" y="380.45" width="0.83" height="1.4" fill="#ffd700" fill-opacity=".45"/>
<rect x="791.64" y="380.45" width="0.83" height="1.4" fill="#d4d4d4" fill-opacity=".45"/>
<rect x="761.26" y="384.45" width="2.79" height="1.4" fill="#569cd6"/>
<rect x="765.18" y="384.45" width="6.71" height="1.4" fill="#9cdcfe"/>
<rect x="773.02" y="384.45" width="0.83" height="1.4" fill="#d4d4d4" fill-opacity=".45"/>
<rect x="774.98" y="384.45" width="10.63" height="1.4" fill="#9cdcfe"/>
<rect x="785.76" y="384.45" width="0.83" height="1.4" fill="#d4d4d4" fill-opacity=".45"/>
<rect x="786.74" y="384.45" width="15.53" height="1.4" fill="#dcdcaa"/>
<rect x="802.42" y="384.45" width="0.83" height="1.4" fill="#ffd700" fill-opacity=".45"/>
<rect x="803.40" y="384.45" width="13.57" height="1.4" fill="#ce9178"/>
<rect x="817.12" y="384.45" width="0.83" height="1.4" fill="#d4d4d4" fill-opacity=".45"/>
<rect x="761.26" y="386.45" width="6.71" height="1.4" fill="#9cdcfe"/>
<rect x="768.12" y="386.45" width="0.83" height="1.4" fill="#d4d4d4" fill-opacity=".45"/>
<rect x="769.10" y="386.45" width="3.77" height="1.4" fill="#9cdcfe"/>
<rect x="774.00" y="386.45" width="0.83" height="1.4" fill="#d4d4d4" fill-opacity=".45"/>
<rect x="775.96" y="386.45" width="7.69" height="1.4" fill="#569cd6"/>
<rect x="783.80" y="386.45" width="0.83" height="1.4" fill="#ffd700" fill-opacity=".45"/>
<rect x="784.78" y="386.45" width="0.83" height="1.4" fill="#9cdcfe"/>
<rect x="785.76" y="386.45" width="0.83" height="1.4" fill="#ffd700" fill-opacity=".45"/>
<rect x="787.72" y="386.45" width="0.83" height="1.4" fill="#ffd700" fill-opacity=".45"/>
<rect x="789.68" y="386.45" width="0.83" height="1.4" fill="#b5cea8"/>
<rect x="791.64" y="386.45" width="0.83" height="1.4" fill="#ffd700" fill-opacity=".45"/>
<rect x="792.62" y="386.45" width="0.83" height="1.4" fill="#d4d4d4" fill-opacity=".45"/>
<rect x="761.26" y="388.45" width="5.73" height="1.4" fill="#9cdcfe"/>
<rect x="767.14" y="388.45" width="0.83" height="1.4" fill="#d4d4d4" fill-opacity=".45"/>
<rect x="768.12" y="388.45" width="17.49" height="1.4" fill="#9cdcfe"/>
<rect x="786.74" y="388.45" width="0.83" height="1.4" fill="#d4d4d4" fill-opacity=".45"/>
<rect x="788.70" y="388.45" width="0.83" height="1.4" fill="#ffd700" fill-opacity=".45"/>
<rect x="790.66" y="388.45" width="0.83" height="1.4" fill="#ffd700" fill-opacity=".45"/>
<rect x="763.22" y="390.45" width="9.65" height="1.4" fill="#9cdcfe"/>
<rect x="773.02" y="390.45" width="0.83" height="1.4" fill="#d4d4d4" fill-opacity=".45"/>
<rect x="774.98" y="390.45" width="0.83" height="1.4" fill="#ffd700" fill-opacity=".45"/>
<rect x="775.96" y="390.45" width="2.79" height="1.4" fill="#9cdcfe"/>
<rect x="778.90" y="390.45" width="0.83" height="1.4" fill="#ffd700" fill-opacity=".45"/>
<rect x="780.86" y="390.45" width="0.83" height="1.4" fill="#d4d4d4" fill-opacity=".45"/>
<rect x="781.84" y="390.45" width="0.83" height="1.4" fill="#d4d4d4" fill-opacity=".45"/>
<rect x="783.80" y="390.45" width="0.83" height="1.4" fill="#ffd700" fill-opacity=".45"/>
<rect x="785.76" y="390.45" width="0.83" height="1.4" fill="#ffd700" fill-opacity=".45"/>
<rect x="765.18" y="392.45" width="2.79" height="1.4" fill="#569cd6"/>
<rect x="769.10" y="392.45" width="5.73" height="1.4" fill="#9cdcfe"/>
<rect x="775.96" y="392.45" width="0.83" height="1.4" fill="#d4d4d4" fill-opacity=".45"/>
<rect x="777.92" y="392.45" width="3.77" height="1.4" fill="#9cdcfe"/>
<rect x="781.84" y="392.45" width="0.83" height="1.4" fill="#d4d4d4" fill-opacity=".45"/>
<rect x="782.82" y="392.45" width="4.75" height="1.4" fill="#dcdcaa"/>
<rect x="787.72" y="392.45" width="0.83" height="1.4" fill="#ffd700" fill-opacity=".45"/>
<rect x="788.70" y="392.45" width="10.63" height="1.4" fill="#9cdcfe"/>
<rect x="799.48" y="392.45" width="0.83" height="1.4" fill="#d4d4d4" fill-opacity=".45"/>
<rect x="800.46" y="392.45" width="11.61" height="1.4" fill="#9cdcfe"/>
<rect x="813.20" y="392.45" width="0.83" height="1.4" fill="#d4d4d4" fill-opacity=".45"/>
<rect x="814.18" y="392.45" width="0.83" height="1.4" fill="#d4d4d4" fill-opacity=".45"/>
<rect x="816.14" y="392.45" width="1.81" height="1.4" fill="#ce9178"/>
<rect x="765.18" y="394.45" width="2.79" height="1.4" fill="#569cd6"/>
<rect x="769.10" y="394.45" width="3.77" height="1.4" fill="#9cdcfe"/>
<rect x="774.00" y="394.45" width="0.83" height="1.4" fill="#d4d4d4" fill-opacity=".45"/>
<rect x="775.96" y="394.45" width="5.73" height="1.4" fill="#9cdcfe"/>
<rect x="781.84" y="394.45" width="0.83" height="1.4" fill="#d4d4d4" fill-opacity=".45"/>
<rect x="782.82" y="394.45" width="3.77" height="1.4" fill="#9cdcfe"/>
<rect x="786.74" y="394.45" width="0.83" height="1.4" fill="#d4d4d4" fill-opacity=".45"/>
<rect x="787.72" y="394.45" width="7.69" height="1.4" fill="#9cdcfe"/>
<rect x="796.54" y="394.45" width="0.83" height="1.4" fill="#d4d4d4" fill-opacity=".45"/>
<rect x="797.52" y="394.45" width="0.83" height="1.4" fill="#d4d4d4" fill-opacity=".45"/>
<rect x="799.48" y="394.45" width="5.73" height="1.4" fill="#9cdcfe"/>
<rect x="805.36" y="394.45" width="0.83" height="1.4" fill="#d4d4d4" fill-opacity=".45"/>
<rect x="806.34" y="394.45" width="3.77" height="1.4" fill="#9cdcfe"/>
<rect x="810.26" y="394.45" width="0.83" height="1.4" fill="#d4d4d4" fill-opacity=".45"/>
<rect x="811.24" y="394.45" width="6.71" height="1.4" fill="#9cdcfe"/>
<rect x="765.18" y="396.45" width="5.73" height="1.4" fill="#569cd6"/>
<rect x="772.04" y="396.45" width="3.77" height="1.4" fill="#9cdcfe"/>
<rect x="775.96" y="396.45" width="0.83" height="1.4" fill="#d4d4d4" fill-opacity=".45"/>
<rect x="763.22" y="398.45" width="0.83" height="1.4" fill="#ffd700" fill-opacity=".45"/>
<rect x="761.26" y="400.45" width="0.83" height="1.4" fill="#ffd700" fill-opacity=".45"/>
<rect x="762.24" y="400.45" width="0.83" height="1.4" fill="#d4d4d4" fill-opacity=".45"/>
<rect x="761.26" y="402.45" width="10.63" height="1.4" fill="#9cdcfe"/>
<rect x="772.04" y="402.45" width="0.83" height="1.4" fill="#d4d4d4" fill-opacity=".45"/>
<rect x="773.02" y="402.45" width="15.53" height="1.4" fill="#dcdcaa"/>
<rect x="788.70" y="402.45" width="0.83" height="1.4" fill="#ffd700" fill-opacity=".45"/>
<rect x="789.68" y="402.45" width="0.83" height="1.4" fill="#9cdcfe"/>
<rect x="790.66" y="402.45" width="0.83" height="1.4" fill="#ffd700" fill-opacity=".45"/>
<rect x="791.64" y="402.45" width="0.83" height="1.4" fill="#d4d4d4" fill-opacity=".45"/>
<rect x="761.26" y="406.45" width="2.79" height="1.4" fill="#569cd6"/>
<rect x="765.18" y="406.45" width="6.71" height="1.4" fill="#9cdcfe"/>
<rect x="773.02" y="406.45" width="0.83" height="1.4" fill="#d4d4d4" fill-opacity=".45"/>
<rect x="774.98" y="406.45" width="10.63" height="1.4" fill="#9cdcfe"/>
<rect x="785.76" y="406.45" width="0.83" height="1.4" fill="#d4d4d4" fill-opacity=".45"/>
<rect x="786.74" y="406.45" width="15.53" height="1.4" fill="#dcdcaa"/>
<rect x="802.42" y="406.45" width="0.83" height="1.4" fill="#ffd700" fill-opacity=".45"/>
<rect x="803.40" y="406.45" width="13.57" height="1.4" fill="#ce9178"/>
<rect x="817.12" y="406.45" width="0.83" height="1.4" fill="#d4d4d4" fill-opacity=".45"/>
<rect x="761.26" y="408.45" width="6.71" height="1.4" fill="#9cdcfe"/>
<rect x="768.12" y="408.45" width="0.83" height="1.4" fill="#d4d4d4" fill-opacity=".45"/>
<rect x="769.10" y="408.45" width="3.77" height="1.4" fill="#9cdcfe"/>
<rect x="774.00" y="408.45" width="0.83" height="1.4" fill="#d4d4d4" fill-opacity=".45"/>
<rect x="775.96" y="408.45" width="7.69" height="1.4" fill="#569cd6"/>
<rect x="783.80" y="408.45" width="0.83" height="1.4" fill="#ffd700" fill-opacity=".45"/>
<rect x="784.78" y="408.45" width="0.83" height="1.4" fill="#9cdcfe"/>
<rect x="785.76" y="408.45" width="0.83" height="1.4" fill="#ffd700" fill-opacity=".45"/>
<rect x="787.72" y="408.45" width="0.83" height="1.4" fill="#ffd700" fill-opacity=".45"/>
<rect x="789.68" y="408.45" width="0.83" height="1.4" fill="#b5cea8"/>
<rect x="791.64" y="408.45" width="0.83" height="1.4" fill="#ffd700" fill-opacity=".45"/>
<rect x="792.62" y="408.45" width="0.83" height="1.4" fill="#d4d4d4" fill-opacity=".45"/>
<rect x="761.26" y="410.45" width="6.71" height="1.4" fill="#9cdcfe"/>
<rect x="768.12" y="410.45" width="0.83" height="1.4" fill="#d4d4d4" fill-opacity=".45"/>
<rect x="769.10" y="410.45" width="17.49" height="1.4" fill="#9cdcfe"/>
<rect x="787.72" y="410.45" width="0.83" height="1.4" fill="#d4d4d4" fill-opacity=".45"/>
<rect x="789.68" y="410.45" width="0.83" height="1.4" fill="#ffd700" fill-opacity=".45"/>
<rect x="790.66" y="410.45" width="0.83" height="1.4" fill="#ffd700" fill-opacity=".45"/>
<rect x="763.22" y="412.45" width="9.65" height="1.4" fill="#9cdcfe"/>
<rect x="773.02" y="412.45" width="0.83" height="1.4" fill="#d4d4d4" fill-opacity=".45"/>
<rect x="774.98" y="412.45" width="0.83" height="1.4" fill="#ffd700" fill-opacity=".45"/>
<rect x="775.96" y="412.45" width="2.79" height="1.4" fill="#9cdcfe"/>
<rect x="778.90" y="412.45" width="0.83" height="1.4" fill="#ffd700" fill-opacity=".45"/>
<rect x="780.86" y="412.45" width="0.83" height="1.4" fill="#d4d4d4" fill-opacity=".45"/>
<rect x="781.84" y="412.45" width="0.83" height="1.4" fill="#d4d4d4" fill-opacity=".45"/>
<rect x="783.80" y="412.45" width="0.83" height="1.4" fill="#ffd700" fill-opacity=".45"/>
<rect x="785.76" y="412.45" width="0.83" height="1.4" fill="#ffd700" fill-opacity=".45"/>
<rect x="765.18" y="414.45" width="2.79" height="1.4" fill="#569cd6"/>
<rect x="769.10" y="414.45" width="2.79" height="1.4" fill="#9cdcfe"/>
<rect x="773.02" y="414.45" width="0.83" height="1.4" fill="#d4d4d4" fill-opacity=".45"/>
<rect x="774.98" y="414.45" width="3.77" height="1.4" fill="#9cdcfe"/>
<rect x="778.90" y="414.45" width="0.83" height="1.4" fill="#d4d4d4" fill-opacity=".45"/>
<rect x="779.88" y="414.45" width="4.75" height="1.4" fill="#dcdcaa"/>
<rect x="784.78" y="414.45" width="0.83" height="1.4" fill="#ffd700" fill-opacity=".45"/>
<rect x="785.76" y="414.45" width="10.63" height="1.4" fill="#9cdcfe"/>
<rect x="796.54" y="414.45" width="0.83" height="1.4" fill="#d4d4d4" fill-opacity=".45"/>
<rect x="797.52" y="414.45" width="11.61" height="1.4" fill="#9cdcfe"/>
<rect x="810.26" y="414.45" width="0.83" height="1.4" fill="#d4d4d4" fill-opacity=".45"/>
<rect x="811.24" y="414.45" width="0.83" height="1.4" fill="#d4d4d4" fill-opacity=".45"/>
<rect x="813.20" y="414.45" width="3.77" height="1.4" fill="#ce9178"/>
<rect x="765.18" y="416.45" width="2.79" height="1.4" fill="#569cd6"/>
<rect x="769.10" y="416.45" width="3.77" height="1.4" fill="#9cdcfe"/>
<rect x="774.00" y="416.45" width="0.83" height="1.4" fill="#d4d4d4" fill-opacity=".45"/>
<rect x="775.96" y="416.45" width="12.59" height="1.4" fill="#dcdcaa"/>
<rect x="788.70" y="416.45" width="0.83" height="1.4" fill="#ffd700" fill-opacity=".45"/>
<rect x="789.68" y="416.45" width="2.79" height="1.4" fill="#9cdcfe"/>
<rect x="792.62" y="416.45" width="0.83" height="1.4" fill="#d4d4d4" fill-opacity=".45"/>
<rect x="793.60" y="416.45" width="3.77" height="1.4" fill="#9cdcfe"/>
<rect x="797.52" y="416.45" width="0.83" height="1.4" fill="#ffd700" fill-opacity=".45"/>
<rect x="798.50" y="416.45" width="0.83" height="1.4" fill="#d4d4d4" fill-opacity=".45"/>
<rect x="765.18" y="418.45" width="2.79" height="1.4" fill="#9cdcfe"/>
<rect x="768.12" y="418.45" width="0.83" height="1.4" fill="#d4d4d4" fill-opacity=".45"/>
<rect x="769.10" y="418.45" width="3.77" height="1.4" fill="#9cdcfe"/>
<rect x="774.00" y="418.45" width="0.83" height="1.4" fill="#d4d4d4" fill-opacity=".45"/>
<rect x="775.96" y="418.45" width="4.75" height="1.4" fill="#9cdcfe"/>
<rect x="780.86" y="418.45" width="0.83" height="1.4" fill="#d4d4d4" fill-opacity=".45"/>
<rect x="781.84" y="418.45" width="0.83" height="1.4" fill="#d4d4d4" fill-opacity=".45"/>
<rect x="765.18" y="420.45" width="5.73" height="1.4" fill="#569cd6"/>
<rect x="772.04" y="420.45" width="3.77" height="1.4" fill="#9cdcfe"/>
<rect x="775.96" y="420.45" width="0.83" height="1.4" fill="#d4d4d4" fill-opacity=".45"/>
<rect x="763.22" y="422.45" width="0.83" height="1.4" fill="#ffd700" fill-opacity=".45"/>
<rect x="761.26" y="424.45" width="0.83" height="1.4" fill="#ffd700" fill-opacity=".45"/>
<rect x="762.24" y="424.45" width="0.83" height="1.4" fill="#d4d4d4" fill-opacity=".45"/>
<rect x="761.26" y="426.45" width="10.63" height="1.4" fill="#9cdcfe"/>
<rect x="772.04" y="426.45" width="0.83" height="1.4" fill="#d4d4d4" fill-opacity=".45"/>
<rect x="773.02" y="426.45" width="15.53" height="1.4" fill="#dcdcaa"/>
<rect x="788.70" y="426.45" width="0.83" height="1.4" fill="#ffd700" fill-opacity=".45"/>
<rect x="789.68" y="426.45" width="0.83" height="1.4" fill="#9cdcfe"/>
<rect x="790.66" y="426.45" width="0.83" height="1.4" fill="#ffd700" fill-opacity=".45"/>
<rect x="791.64" y="426.45" width="0.83" height="1.4" fill="#d4d4d4" fill-opacity=".45"/>
<rect x="761.26" y="430.45" width="7.69" height="1.4" fill="#9cdcfe"/>
<rect x="769.10" y="430.45" width="0.83" height="1.4" fill="#d4d4d4" fill-opacity=".45"/>
<rect x="770.08" y="430.45" width="3.77" height="1.4" fill="#9cdcfe"/>
<rect x="774.00" y="430.45" width="0.83" height="1.4" fill="#d4d4d4" fill-opacity=".45"/>
<rect x="774.98" y="430.45" width="10.63" height="1.4" fill="#dcdcaa"/>
<rect x="785.76" y="430.45" width="0.83" height="1.4" fill="#ffd700" fill-opacity=".45"/>
<rect x="786.74" y="430.45" width="11.61" height="1.4" fill="#dcdcaa"/>
<rect x="798.50" y="430.45" width="0.83" height="1.4" fill="#ffd700" fill-opacity=".45"/>
<rect x="799.48" y="430.45" width="0.83" height="1.4" fill="#b5cea8"/>
<rect x="800.46" y="430.45" width="0.83" height="1.4" fill="#ffd700" fill-opacity=".45"/>
<rect x="801.44" y="430.45" width="0.83" height="1.4" fill="#ffd700" fill-opacity=".45"/>
<rect x="802.42" y="430.45" width="0.83" height="1.4" fill="#d4d4d4" fill-opacity=".45"/>
<rect x="759.30" y="432.45" width="0.83" height="1.4" fill="#ffd700" fill-opacity=".45"/>
<rect x="760.28" y="432.45" width="0.83" height="1.4" fill="#ffd700" fill-opacity=".45"/>
<rect x="761.26" y="432.45" width="0.83" height="1.4" fill="#d4d4d4" fill-opacity=".45"/>
</g>
<rect x="819.1" y="133.5" width="1.4" height="446.5" fill="#0c0c0c"/>
<path d="M820 133.9H836" stroke="#0b0b0b" stroke-width="1" stroke-dasharray="1.5 1.5"/>
<rect x="820.6" y="151.2" width="13.6" height="3" fill="#666662"/>
<rect x="834" y="134.4" width="2" height="7.6" fill="#3794ff"/>
<rect x="834" y="146.7" width="2" height="8.3" fill="#3794ff"/>
<rect x="834" y="301" width="2" height="8.2" fill="#3794ff"/>
<rect x="834" y="352" width="2" height="8.4" fill="#3794ff"/>
<rect x="834" y="371" width="2" height="8.6" fill="#d6311f"/>
<rect x="834" y="414.5" width="2" height="8.1" fill="#3794ff"/>
<rect x="834" y="455.5" width="2" height="8.2" fill="#3794ff"/>
</svg>
<div id="bottom"></div>
</body></html>
